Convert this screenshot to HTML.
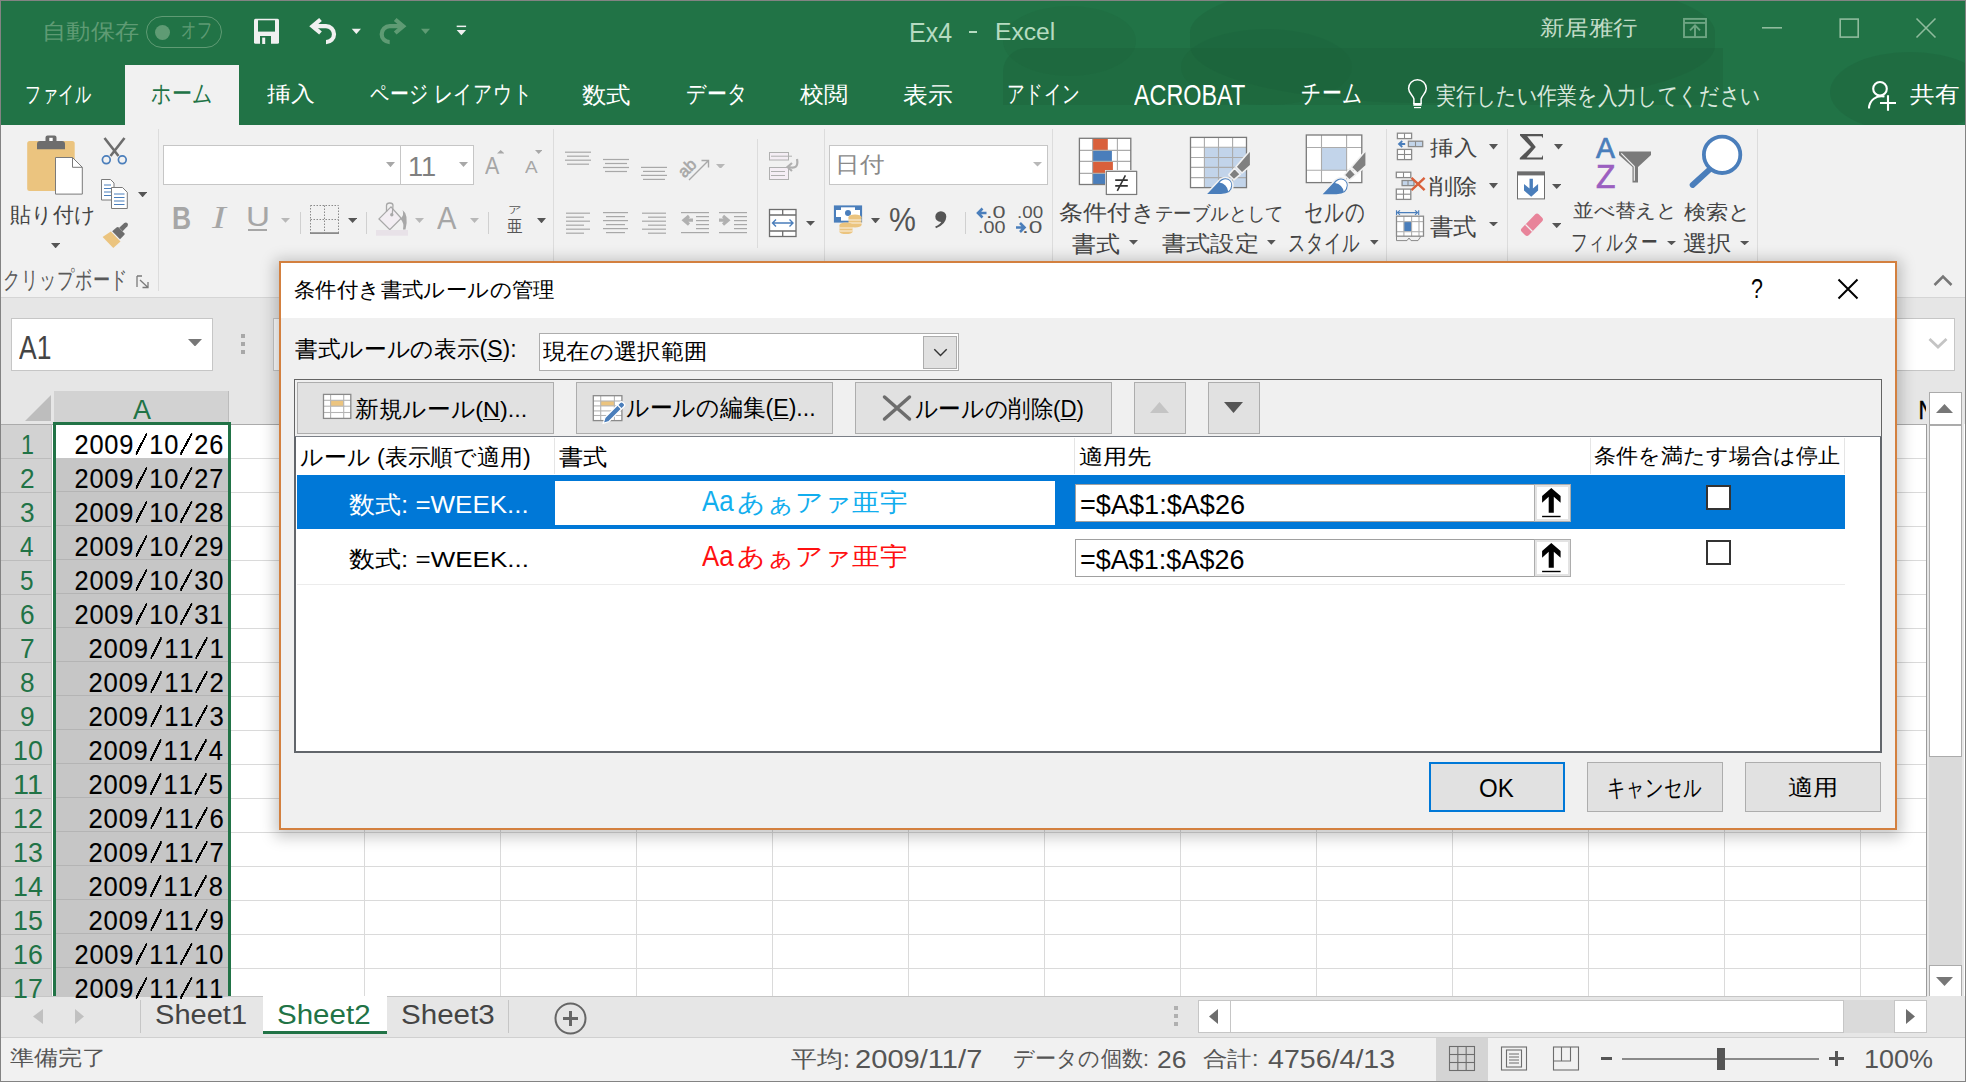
<!DOCTYPE html>
<html><head><meta charset="utf-8"><style>
html,body{margin:0;padding:0;width:1966px;height:1082px;overflow:hidden;background:#fff;font-family:"Liberation Sans",sans-serif}
u{text-decoration-thickness:1px;text-underline-offset:2px}
</style></head><body>
<div style="position:absolute;z-index:1;left:0px;top:0px;width:1966px;height:125px;background:#217346"></div>
<div style="position:absolute;z-index:1;left:1003px;top:48px;width:720px;height:57px;background:#1b5e37;opacity:0.3;border-radius:24px 0 0 0"></div>
<div style="position:absolute;z-index:1;left:1003px;top:6px;width:133px;height:70px;background:#1b5e37;opacity:0.18;border-radius:50%"></div>
<div style="position:absolute;z-index:1;left:1181px;top:29px;width:171px;height:76px;background:#1b5e37;opacity:0.22;border-radius:50%"></div>
<div style="position:absolute;z-index:1;left:1190px;top:-25px;width:525px;height:128px;background:#1b5e37;opacity:0.3;border-radius:45%"></div>
<div style="position:absolute;z-index:1;left:1830px;top:52px;width:160px;height:80px;background:#1b5e37;opacity:0.3;border-radius:50%"></div>
<div style="position:absolute;z-index:1;left:1560px;top:60px;width:160px;height:45px;background:#1b5e37;opacity:0.1;border-radius:0"></div>
<div style="position:absolute;z-index:1;left:0px;top:125px;width:1966px;height:172px;background:#f1f1f1"></div>
<div style="position:absolute;z-index:1;left:0px;top:298px;width:1966px;height:126px;background:#e6e6e6"></div>
<div style="position:absolute;z-index:1;left:228px;top:424px;width:1699px;height:572px;background-color:#fff;background-image:repeating-linear-gradient(to bottom, transparent 0, transparent 33px, #dadada 33px, #dadada 34px),repeating-linear-gradient(to right, transparent 0, transparent 135px, #dadada 135px, #dadada 136px);background-position:0 1px, 1px 0"></div>
<div style="position:absolute;z-index:1;left:228px;top:424px;width:1px;height:572px;background:#dadada"></div>
<div style="position:absolute;z-index:1;left:52px;top:424px;width:176px;height:572px;background:#fff"></div>
<div style="position:absolute;z-index:1;left:52px;top:391px;width:1875px;height:33px;background:#e6e6e6"></div>
<div style="position:absolute;z-index:1;left:0px;top:424px;width:52px;height:572px;background:#d2d2d2;background-image:repeating-linear-gradient(to bottom, transparent 0, transparent 33px, #bcbcbc 33px, #bcbcbc 34px);background-position:0 1px"></div>
<div style="position:absolute;z-index:2;left:125px;top:65px;width:114px;height:60px;background:#f1f1f1"></div>
<div style="position:absolute;z-index:2;left:0px;top:297px;width:1966px;height:1px;background:#d5d5d5"></div>
<div style="position:absolute;z-index:2;left:158px;top:129px;width:1px;height:162px;background:#dcdcdc"></div>
<div style="position:absolute;z-index:2;left:553px;top:129px;width:1px;height:162px;background:#dcdcdc"></div>
<div style="position:absolute;z-index:2;left:824px;top:129px;width:1px;height:162px;background:#dcdcdc"></div>
<div style="position:absolute;z-index:2;left:1052px;top:129px;width:1px;height:162px;background:#dcdcdc"></div>
<div style="position:absolute;z-index:2;left:1386px;top:129px;width:1px;height:162px;background:#dcdcdc"></div>
<div style="position:absolute;z-index:2;left:1507px;top:129px;width:1px;height:162px;background:#dcdcdc"></div>
<div style="position:absolute;z-index:2;left:1757px;top:129px;width:1px;height:162px;background:#dcdcdc"></div>
<div style="position:absolute;z-index:2;left:757px;top:139px;width:1px;height:109px;background:#dcdcdc"></div>
<div style="position:absolute;z-index:2;left:163px;top:145px;width:238px;height:40px;background:#fff;border:1px solid #c6c6c6;box-sizing:border-box"></div>
<div style="position:absolute;z-index:2;left:400px;top:145px;width:74px;height:40px;background:#fff;border:1px solid #c6c6c6;box-sizing:border-box"></div>
<div style="position:absolute;z-index:2;left:829px;top:145px;width:219px;height:40px;background:#fff;border:1px solid #c6c6c6;box-sizing:border-box"></div>
<div style="position:absolute;z-index:2;left:11px;top:318px;width:202px;height:53px;background:#fff;border:1px solid #c6c6c6;box-sizing:border-box"></div>
<div style="position:absolute;z-index:2;left:273px;top:318px;width:1682px;height:53px;background:#fff;border:1px solid #c6c6c6;box-sizing:border-box"></div>
<div style="position:absolute;z-index:2;left:0px;top:424px;width:1927px;height:1px;background:#ababab"></div>
<div style="position:absolute;z-index:2;left:54px;top:391px;width:175px;height:33px;background:#d2d2d2"></div>
<div style="position:absolute;z-index:2;left:228px;top:391px;width:1px;height:33px;background:#bcbcbc"></div>
<div style="position:absolute;z-index:2;left:1900px;top:392px;width:26px;height:32px;overflow:hidden"><div style="position:absolute;left:17.4px;top:5px;font-family:Liberation Sans;font-size:26px;line-height:1;color:#000;-webkit-text-stroke:0.5px #000;transform:scaleX(0.85)">N</div></div>
<div style="position:absolute;z-index:2;left:51px;top:424px;width:1px;height:572px;background:#bcbcbc"></div>
<div style="position:absolute;z-index:2;left:55px;top:458px;width:173px;height:538px;background:#c6c6c6;background-image:repeating-linear-gradient(to bottom, transparent 0, transparent 33px, #b4b4b4 33px, #b4b4b4 34px)"></div>
<div style="position:absolute;z-index:2;left:1927px;top:391px;width:37px;height:606px;background:#e6e6e6"></div>
<div style="position:absolute;z-index:3;left:146px;top:16px;width:76px;height:32px;border:1px solid #5f9b74;border-radius:16px;box-sizing:border-box"></div>
<div style="position:absolute;z-index:3;left:155px;top:24.5px;width:15px;height:15px;background:#5f9b74;border-radius:50%"></div>
<div style="position:absolute;z-index:3;left:969px;top:31px;width:8px;height:2px;background:#b6dbc1"></div>
<div style="position:absolute;z-index:3;left:248px;top:229px;width:19px;height:2px;background:#a6a6a6"></div>
<div style="position:absolute;z-index:3;left:241px;top:334px;width:4px;height:4px;background:#a8a8a8"></div>
<div style="position:absolute;z-index:3;left:241px;top:342px;width:4px;height:4px;background:#a8a8a8"></div>
<div style="position:absolute;z-index:3;left:241px;top:350px;width:4px;height:4px;background:#a8a8a8"></div>
<svg style="position:absolute;z-index:3;left:25px;top:395px" width="26" height="26" viewBox="0 0 26 26"><polygon points="26,0 26,26 0,26" fill="#bdbdbd"/></svg>
<div style="position:absolute;z-index:3;left:53px;top:422px;width:178px;height:590px;border:3px solid #217346;box-sizing:border-box;border-bottom:none"></div>
<div style="position:absolute;z-index:3;left:1929px;top:425px;width:33px;height:540px;background:#dadada"></div>
<div style="position:absolute;z-index:3;left:1929px;top:392px;width:33px;height:33px;background:#fff;border:1px solid #ababab;box-sizing:border-box"></div>
<div style="position:absolute;z-index:3;left:1929px;top:425px;width:33px;height:332px;background:#fff;border:1px solid #ababab;box-sizing:border-box"></div>
<div style="position:absolute;z-index:3;left:1929px;top:965px;width:33px;height:32px;background:#fff;border:1px solid #ababab;box-sizing:border-box"></div>
<svg style="position:absolute;z-index:3;left:1936px;top:404px" width="17" height="9" viewBox="0 0 17 9"><polygon points="8.5,0 17,9 0,9" fill="#777"/></svg>
<svg style="position:absolute;z-index:3;left:1936px;top:977px" width="17" height="9" viewBox="0 0 17 9"><polygon points="0,0 17,0 8.5,9" fill="#777"/></svg>
<div style="position:absolute;z-index:3;left:1926px;top:424px;width:1px;height:572px;background:#9b9b9b"></div>
<div style="position:absolute;z-index:3;left:299.5px;top:212px;width:1px;height:21.5px;background:#d0d0d0"></div>
<div style="position:absolute;z-index:3;left:366.4px;top:212px;width:1px;height:21.5px;background:#d0d0d0"></div>
<div style="position:absolute;z-index:3;left:488.3px;top:212px;width:1px;height:21.5px;background:#d0d0d0"></div>
<div style="position:absolute;z-index:3;left:965.3px;top:212px;width:1px;height:22px;background:#d0d0d0"></div>
<div style="position:absolute;z-index:4;left:0px;top:996px;width:1966px;height:41px;background:#e6e6e6"></div>
<div style="position:absolute;z-index:4;left:0px;top:996px;width:1927px;height:1px;background:#c6c6c6"></div>
<div style="position:absolute;z-index:4;left:0px;top:1037px;width:1966px;height:45px;background:#f1f1f1"></div>
<div style="position:absolute;z-index:4;left:0px;top:1037px;width:1966px;height:1px;background:#d0d0d0"></div>
<svg style="position:absolute;z-index:4;left:0;top:0;pointer-events:none" width="1966" height="1082" viewBox="0 0 1966 1082">
<rect x="27.2" y="141" width="47.5" height="50" rx="2.5" fill="#ebc47f"/>
<path d="M37,149.3 L37,144 Q37,141 40,141 L45.5,141 L45.5,137.5 Q45.5,135.5 47.5,135.5 L54.5,135.5 Q56.5,135.5 56.5,137.5 L56.5,141 L62,141 Q65,141 65,144 L65,149.3 Z" fill="#6d6d6d"/>
<rect x="49.3" y="137.8" width="3.4" height="3.2" fill="#fff"/>
<path d="M55.5,157.5 L72.5,157.5 L82.3,167.3 L82.3,194.1 L55.5,194.1 Z" fill="#fff" stroke="#7a7a7a" stroke-width="1"/>
<path d="M72.5,157.5 L72.5,167.3 L82.3,167.3" fill="none" stroke="#7a7a7a" stroke-width="1"/>
<path d="M104.5,138 L118.5,156 M124.5,138 L110.5,156" stroke="#6d6d6d" stroke-width="2.6"/>
<circle cx="106.3" cy="159.8" r="3.9" fill="none" stroke="#4a7ebb" stroke-width="1.7"/>
<circle cx="122.3" cy="159.8" r="3.9" fill="none" stroke="#4a7ebb" stroke-width="1.7"/>
<path d="M101.5,179.5 L110.5,179.5 L114,183 L114,200 L101.5,200 Z" fill="#fff" stroke="#7a7a7a" stroke-width="1"/>
<path d="M104,185 h7 M104,188.5 h7 M104,192 h7 M104,195.5 h7" stroke="#4a7ebb" stroke-width="1"/>
<path d="M111.5,187.5 L122.5,187.5 L127.3,192.3 L127.3,208.5 L111.5,208.5 Z" fill="#fff" stroke="#7a7a7a" stroke-width="1"/>
<path d="M114,194 h10.5 M114,197.5 h10.5 M114,201 h10.5 M114,204.5 h10.5" stroke="#4a7ebb" stroke-width="1"/>
<path d="M102.6,236.9 L110.8,231.5 L120.5,241.5 L113.3,247.9 Z" fill="#ebc47f"/>
<path d="M112.2,231.2 L116.5,227.5 Q117.8,226.6 118.8,227.6 L124.3,233.2 Q125.1,234.2 124.2,235.1 L120,239.3 Z" fill="#6d6d6d"/>
<path d="M119.2,227.8 L124.3,223 Q126,221.8 127.5,223.3 Q128.6,224.8 127.4,226.2 L122.6,231.2 Z" fill="#6d6d6d"/>
<path d="M137,276 L137,287 M137,276 L142,276 M140,280 L148,287.5 M148,282 L148,287.5 L142.5,287.5" fill="none" stroke="#7a7a7a" stroke-width="1.3"/>
</svg>
<svg style="position:absolute;z-index:4;left:51px;top:243px" width="9.200000000000003" height="5.300000000000011" viewBox="0 0 9.200000000000003 5.300000000000011"><polygon points="0,0 9.200000000000003,0 4.600000000000001,5.300000000000011" fill="#555"/></svg>
<svg style="position:absolute;z-index:4;left:137.8px;top:191.7px" width="9.199999999999989" height="5.300000000000011" viewBox="0 0 9.199999999999989 5.300000000000011"><polygon points="0,0 9.199999999999989,0 4.599999999999994,5.300000000000011" fill="#555"/></svg>
<svg style="position:absolute;z-index:4;left:386px;top:161.8px" width="9" height="5.199999999999989" viewBox="0 0 9 5.199999999999989"><polygon points="0,0 9,0 4.5,5.199999999999989" fill="#a8a8a8"/></svg>
<svg style="position:absolute;z-index:4;left:459px;top:162px" width="9" height="5" viewBox="0 0 9 5"><polygon points="0,0 9,0 4.5,5" fill="#a8a8a8"/></svg>
<svg style="position:absolute;z-index:4;left:281px;top:218px" width="9" height="4.699999999999989" viewBox="0 0 9 4.699999999999989"><polygon points="0,0 9,0 4.5,4.699999999999989" fill="#b8b8b8"/></svg>
<svg style="position:absolute;z-index:4;left:347.8px;top:218px" width="9.199999999999989" height="5" viewBox="0 0 9.199999999999989 5"><polygon points="0,0 9.199999999999989,0 4.599999999999994,5" fill="#555"/></svg>
<svg style="position:absolute;z-index:4;left:415px;top:218px" width="9" height="5" viewBox="0 0 9 5"><polygon points="0,0 9,0 4.5,5" fill="#b8b8b8"/></svg>
<svg style="position:absolute;z-index:4;left:470px;top:218px" width="9" height="5" viewBox="0 0 9 5"><polygon points="0,0 9,0 4.5,5" fill="#b8b8b8"/></svg>
<svg style="position:absolute;z-index:4;left:537px;top:217.7px" width="9" height="5.300000000000011" viewBox="0 0 9 5.300000000000011"><polygon points="0,0 9,0 4.5,5.300000000000011" fill="#555"/></svg>
<svg style="position:absolute;z-index:4;left:716px;top:163.6px" width="9" height="4.900000000000006" viewBox="0 0 9 4.900000000000006"><polygon points="0,0 9,0 4.5,4.900000000000006" fill="#b8b8b8"/></svg>
<svg style="position:absolute;z-index:4;left:806px;top:221px" width="9" height="4.800000000000011" viewBox="0 0 9 4.800000000000011"><polygon points="0,0 9,0 4.5,4.800000000000011" fill="#555"/></svg>
<svg style="position:absolute;z-index:4;left:871px;top:217.6px" width="9" height="5.400000000000006" viewBox="0 0 9 5.400000000000006"><polygon points="0,0 9,0 4.5,5.400000000000006" fill="#555"/></svg>
<svg style="position:absolute;z-index:4;left:1033px;top:162px" width="9" height="4.599999999999994" viewBox="0 0 9 4.599999999999994"><polygon points="0,0 9,0 4.5,4.599999999999994" fill="#b8b8b8"/></svg>
<svg style="position:absolute;z-index:4;left:1129px;top:240px" width="9" height="4.699999999999989" viewBox="0 0 9 4.699999999999989"><polygon points="0,0 9,0 4.5,4.699999999999989" fill="#555"/></svg>
<svg style="position:absolute;z-index:4;left:1267px;top:240px" width="8.700000000000045" height="4.699999999999989" viewBox="0 0 8.700000000000045 4.699999999999989"><polygon points="0,0 8.700000000000045,0 4.350000000000023,4.699999999999989" fill="#555"/></svg>
<svg style="position:absolute;z-index:4;left:1370px;top:240px" width="8.599999999999909" height="4.699999999999989" viewBox="0 0 8.599999999999909 4.699999999999989"><polygon points="0,0 8.599999999999909,0 4.2999999999999545,4.699999999999989" fill="#555"/></svg>
<svg style="position:absolute;z-index:4;left:1489px;top:144.3px" width="9" height="5.399999999999977" viewBox="0 0 9 5.399999999999977"><polygon points="0,0 9,0 4.5,5.399999999999977" fill="#555"/></svg>
<svg style="position:absolute;z-index:4;left:1489px;top:183px" width="9" height="5.5" viewBox="0 0 9 5.5"><polygon points="0,0 9,0 4.5,5.5" fill="#555"/></svg>
<svg style="position:absolute;z-index:4;left:1489px;top:221.6px" width="9" height="4.400000000000006" viewBox="0 0 9 4.400000000000006"><polygon points="0,0 9,0 4.5,4.400000000000006" fill="#555"/></svg>
<svg style="position:absolute;z-index:4;left:1554px;top:144.3px" width="9" height="5.399999999999977" viewBox="0 0 9 5.399999999999977"><polygon points="0,0 9,0 4.5,5.399999999999977" fill="#555"/></svg>
<svg style="position:absolute;z-index:4;left:1552px;top:184px" width="9.400000000000091" height="5" viewBox="0 0 9.400000000000091 5"><polygon points="0,0 9.400000000000091,0 4.7000000000000455,5" fill="#555"/></svg>
<svg style="position:absolute;z-index:4;left:1552px;top:222.9px" width="9.400000000000091" height="5.099999999999994" viewBox="0 0 9.400000000000091 5.099999999999994"><polygon points="0,0 9.400000000000091,0 4.7000000000000455,5.099999999999994" fill="#555"/></svg>
<svg style="position:absolute;z-index:4;left:1667px;top:240.6px" width="9" height="4.200000000000017" viewBox="0 0 9 4.200000000000017"><polygon points="0,0 9,0 4.5,4.200000000000017" fill="#555"/></svg>
<svg style="position:absolute;z-index:4;left:1740px;top:240.6px" width="9.299999999999955" height="4.200000000000017" viewBox="0 0 9.299999999999955 4.200000000000017"><polygon points="0,0 9.299999999999955,0 4.649999999999977,4.200000000000017" fill="#555"/></svg>
<svg style="position:absolute;z-index:4;left:188px;top:338.9px" width="14" height="7.5" viewBox="0 0 14 7.5"><polygon points="0,0 14,0 7.0,7.5" fill="#777"/></svg>
<svg style="position:absolute;z-index:4;left:496.7px;top:150.4px" width="7.300000000000011" height="3.4000000000000057" viewBox="0 0 7.300000000000011 3.4000000000000057"><polygon points="3.6500000000000057,0 7.300000000000011,3.4000000000000057 0,3.4000000000000057" fill="#a8a8a8"/></svg>
<svg style="position:absolute;z-index:4;left:534.6px;top:149.8px" width="7.399999999999977" height="4.0" viewBox="0 0 7.399999999999977 4.0"><polygon points="0,0 7.399999999999977,0 3.6999999999999886,4.0" fill="#a8a8a8"/></svg>
<svg style="position:absolute;z-index:4;left:0;top:0;pointer-events:none" width="1966" height="1082" viewBox="0 0 1966 1082">
<g fill="none" stroke="#8a8a8a" stroke-width="1" stroke-dasharray="1.5 1.5">
<rect x="310.5" y="205.5" width="28" height="28"/>
<line x1="324.5" y1="205.5" x2="324.5" y2="233.5"/>
<line x1="310.5" y1="219.5" x2="338.5" y2="219.5"/>
</g>
<rect x="310" y="232.2" width="29" height="1.8" fill="#8a8a8a"/>
<path d="M379,218.9 L391,206.9 L401.2,218.3 L389.8,229.7 Z" fill="#f3eef3" stroke="#a8a8a8" stroke-width="1.3"/>
<path d="M386.5,212 L386.5,205.5 Q386.5,203 389.8,203 Q393,203 393,205.5 L392.3,214" fill="none" stroke="#a8a8a8" stroke-width="1.3"/>
<circle cx="391.8" cy="214.8" r="1.7" fill="#a8a8a8"/>
<path d="M400.5,219 Q404.5,214.5 402.5,210 Q409,214.5 405.5,229.5 L403,229.5 Q404.5,223 400.5,219 Z" fill="#a8a8a8"/>
<rect x="376" y="230" width="32" height="5.7" fill="#e8e2e8"/>
</svg>
<svg style="position:absolute;z-index:4;left:0;top:0;pointer-events:none" width="1966" height="1082" viewBox="0 0 1966 1082"><rect x="565" y="151.6" width="26" height="1.2" fill="#a8a8a8"/><rect x="567" y="155.6" width="22" height="1.2" fill="#a8a8a8"/><rect x="565" y="159.6" width="26" height="1.2" fill="#a8a8a8"/><rect x="567" y="163.6" width="22" height="1.2" fill="#a8a8a8"/><rect x="603" y="158.9" width="26" height="1.2" fill="#a8a8a8"/><rect x="605" y="162.9" width="22" height="1.2" fill="#a8a8a8"/><rect x="603" y="166.9" width="26" height="1.2" fill="#a8a8a8"/><rect x="605" y="170.9" width="22" height="1.2" fill="#a8a8a8"/><rect x="641" y="166.8" width="26" height="1.2" fill="#a8a8a8"/><rect x="643" y="170.8" width="22" height="1.2" fill="#a8a8a8"/><rect x="641" y="174.8" width="26" height="1.2" fill="#a8a8a8"/><rect x="643" y="178.8" width="22" height="1.2" fill="#a8a8a8"/><rect x="566" y="212.6" width="24" height="1.2" fill="#a8a8a8"/><rect x="566" y="216.6" width="18" height="1.2" fill="#a8a8a8"/><rect x="566" y="220.6" width="24" height="1.2" fill="#a8a8a8"/><rect x="566" y="224.6" width="18" height="1.2" fill="#a8a8a8"/><rect x="566" y="228.6" width="24" height="1.2" fill="#a8a8a8"/><rect x="566" y="232.6" width="18" height="1.2" fill="#a8a8a8"/><rect x="603" y="212" width="25" height="1.2" fill="#a8a8a8"/><rect x="606" y="216" width="19" height="1.2" fill="#a8a8a8"/><rect x="603" y="220" width="25" height="1.2" fill="#a8a8a8"/><rect x="606" y="224" width="19" height="1.2" fill="#a8a8a8"/><rect x="603" y="228" width="25" height="1.2" fill="#a8a8a8"/><rect x="606" y="232" width="19" height="1.2" fill="#a8a8a8"/><rect x="642" y="212.6" width="24" height="1.2" fill="#a8a8a8"/><rect x="648" y="216.6" width="18" height="1.2" fill="#a8a8a8"/><rect x="642" y="220.6" width="24" height="1.2" fill="#a8a8a8"/><rect x="648" y="224.6" width="18" height="1.2" fill="#a8a8a8"/><rect x="642" y="228.6" width="24" height="1.2" fill="#a8a8a8"/><rect x="648" y="232.6" width="18" height="1.2" fill="#a8a8a8"/><rect x="681" y="212" width="28" height="1.2" fill="#a8a8a8"/><rect x="696" y="216" width="13" height="1.2" fill="#a8a8a8"/><rect x="696" y="220" width="13" height="1.2" fill="#a8a8a8"/><rect x="696" y="224" width="13" height="1.2" fill="#a8a8a8"/><rect x="696" y="228" width="13" height="1.2" fill="#a8a8a8"/><rect x="681" y="232" width="28" height="1.2" fill="#a8a8a8"/><rect x="719" y="212" width="28" height="1.2" fill="#a8a8a8"/><rect x="734" y="216" width="13" height="1.2" fill="#a8a8a8"/><rect x="734" y="220" width="13" height="1.2" fill="#a8a8a8"/><rect x="734" y="224" width="13" height="1.2" fill="#a8a8a8"/><rect x="734" y="228" width="13" height="1.2" fill="#a8a8a8"/><rect x="719" y="232" width="28" height="1.2" fill="#a8a8a8"/><path d="M693,220.2 L686,220.2 M689,216 L684,220.2 L689,224.4" fill="none" stroke="#b0b0b0" stroke-width="3.2"/>
<path d="M719,220.2 L726,220.2 M723,216 L728,220.2 L723,224.4" fill="none" stroke="#b0b0b0" stroke-width="3.2"/>
<path d="M689,180 L708,161 M701.5,160.5 L708.5,160.5 L708.5,167.5" fill="none" stroke="#a8a8a8" stroke-width="1.4"/>
<text x="0" y="0" transform="translate(684.5,178.5) rotate(-45)" font-family="Liberation Sans" font-size="16.5" fill="#a8a8a8" stroke="#a8a8a8" stroke-width="0.6">ab</text>
<rect x="769.5" y="152.5" width="19" height="7.5" fill="#f5eef5" stroke="#b0b0b0" stroke-width="1"/>
<rect x="769.5" y="167.5" width="19" height="12" fill="#f5eef5" stroke="#b0b0b0" stroke-width="1"/>
<path d="M771,156.2 h21 M771,171.5 h14 M771,175.5 h14" stroke="#b0b0b0" stroke-width="1"/>
<path d="M797,159 Q799,170 789,167" fill="none" stroke="#b0b0b0" stroke-width="2.2"/>
<path d="M792,163 L787.5,167 L792,171" fill="none" stroke="#b0b0b0" stroke-width="2.2"/>
<rect x="769.5" y="209.5" width="26.5" height="27" fill="#fff" stroke="#6d6d6d" stroke-width="1.3"/>
<path d="M769.5,215 h26.5 M769.5,231 h26.5 M782.7,209.5 v5.5 M782.7,231 v5.5" stroke="#6d6d6d" stroke-width="1.3"/>
<path d="M772.5,223 h20.5 M776,219.5 L772.5,223 L776,226.5 M789.5,219.5 L793,223 L789.5,226.5" fill="none" stroke="#4a7ebb" stroke-width="1.4"/>
</svg>
<svg style="position:absolute;z-index:4;left:0;top:0;pointer-events:none" width="1966" height="1082" viewBox="0 0 1966 1082">
<rect x="835" y="206.5" width="26" height="15" fill="none" stroke="#4a7ebb" stroke-width="2.2"/>
<rect x="836" y="207.5" width="24" height="13" fill="#fff"/>
<path d="M835,206 h6 v4 h-6 Z M855,206 h7 v4 h-7 Z M835,217 h6 v5 h-6 Z" fill="#4a7ebb"/>
<circle cx="848" cy="213" r="3" fill="#4a7ebb"/>
<ellipse cx="855" cy="217" rx="6.5" ry="2.5" fill="#ebc47f"/>
<rect x="848.5" y="217" width="13" height="8" fill="#ebc47f"/>
<ellipse cx="855" cy="225" rx="6.5" ry="2.5" fill="#ebc47f"/>
<path d="M848.5,220 h13 M848.5,223 h13" stroke="#fff" stroke-width="0.8"/>
<ellipse cx="846" cy="225" rx="6.5" ry="2.5" fill="#ebc47f"/>
<rect x="839.5" y="225" width="13" height="7" fill="#ebc47f"/>
<ellipse cx="846" cy="232" rx="6.5" ry="2" fill="#ebc47f"/>
<path d="M839.5,228 h13 M839.5,231 h13" stroke="#fff" stroke-width="0.8"/>
<path d="M935.3,216.5 A5.5 5.5 0 1 1 946.3,216.8 Q946,224.5 936,228.2 L935.2,226.6 Q940.2,224 941.3,221.9 Q935.3,221.5 935.3,216.5 Z" fill="#555"/>
<path d="M986.5,213 L978.5,213 M982.5,208.5 L978,213 L982.5,217.5" fill="none" stroke="#4a7ebb" stroke-width="2.6"/>
<path d="M1016,227.5 L1024,227.5 M1020,223 L1024.5,227.5 L1020,232" fill="none" stroke="#4a7ebb" stroke-width="2.6"/>
</svg>
<svg style="position:absolute;z-index:4;left:0;top:0;pointer-events:none" width="1966" height="1082" viewBox="0 0 1966 1082">
<rect x="1079.4" y="138.3" width="51.4" height="46.2" fill="#fff"/>
<rect x="1092.6" y="138.3" width="15.2" height="12.1" fill="#d9603b"/>
<rect x="1092.6" y="150.4" width="19.3" height="11" fill="#4a7ebb"/>
<rect x="1092.6" y="161.4" width="20.3" height="12" fill="#d9603b"/>
<rect x="1092.6" y="173.4" width="14" height="11.1" fill="#4a7ebb"/>
<line x1="1092.6" y1="138.3" x2="1092.6" y2="184.5" stroke="#ababab" stroke-width="1.1"/><line x1="1117.4" y1="138.3" x2="1117.4" y2="184.5" stroke="#ababab" stroke-width="1.1"/><line x1="1079.4" y1="150.4" x2="1130.8" y2="150.4" stroke="#ababab" stroke-width="1.1"/><line x1="1079.4" y1="161.4" x2="1130.8" y2="161.4" stroke="#ababab" stroke-width="1.1"/><line x1="1079.4" y1="173.4" x2="1130.8" y2="173.4" stroke="#ababab" stroke-width="1.1"/><rect x="1079.4" y="138.3" width="51.399999999999864" height="46.19999999999999" fill="none" stroke="#7a7a7a" stroke-width="1.3"/>
<rect x="1106.3" y="171.3" width="30.4" height="23.2" fill="#fff" stroke="#fff" stroke-width="2.5"/>
<rect x="1106.3" y="171.3" width="30.4" height="23.2" fill="#fff" stroke="#7a7a7a" stroke-width="1.3"/>
<path d="M1115.2,180.1 h12.6 M1115.2,185.9 h12.6 M1117.3,190.8 L1125.4,175.4" stroke="#333" stroke-width="1.6"/>
<rect x="1190.5" y="137.4" width="56" height="50.2" fill="#fff"/>
<rect x="1204.4" y="147.3" width="42.1" height="40.3" fill="#c2d4ea"/>
<line x1="1204.4" y1="137.4" x2="1204.4" y2="187.6" stroke="#ababab" stroke-width="1.1"/><line x1="1218.5" y1="137.4" x2="1218.5" y2="187.6" stroke="#ababab" stroke-width="1.1"/><line x1="1232.6" y1="137.4" x2="1232.6" y2="187.6" stroke="#ababab" stroke-width="1.1"/><line x1="1190.5" y1="147.3" x2="1246.5" y2="147.3" stroke="#ababab" stroke-width="1.1"/><line x1="1190.5" y1="157.5" x2="1246.5" y2="157.5" stroke="#ababab" stroke-width="1.1"/><line x1="1190.5" y1="167.4" x2="1246.5" y2="167.4" stroke="#ababab" stroke-width="1.1"/><line x1="1190.5" y1="177.6" x2="1246.5" y2="177.6" stroke="#ababab" stroke-width="1.1"/><rect x="1190.5" y="137.4" width="56.0" height="50.19999999999999" fill="none" stroke="#7a7a7a" stroke-width="1.3"/>
<rect x="1306.3" y="135" width="55.5" height="47.6" fill="#fff"/>
<rect x="1321.5" y="147.5" width="25.1" height="22.8" fill="#c2d4ea"/>
<line x1="1321.5" y1="135" x2="1321.5" y2="182.6" stroke="#ababab" stroke-width="1.1"/><line x1="1346.6" y1="135" x2="1346.6" y2="182.6" stroke="#ababab" stroke-width="1.1"/><line x1="1306.3" y1="147.5" x2="1361.8" y2="147.5" stroke="#ababab" stroke-width="1.1"/><line x1="1306.3" y1="170.3" x2="1361.8" y2="170.3" stroke="#ababab" stroke-width="1.1"/><rect x="1306.3" y="135" width="55.5" height="47.599999999999994" fill="none" stroke="#7a7a7a" stroke-width="1.3"/>
</svg>
<svg style="position:absolute;z-index:4;left:0;top:0;pointer-events:none" width="1966" height="1082" viewBox="0 0 1966 1082">
<rect x="1397.4" y="133.2" width="14.2" height="5.4" fill="#fff"/><line x1="1404.5" y1="133.2" x2="1404.5" y2="138.6" stroke="#8a8a8a" stroke-width="1.1"/><rect x="1397.4" y="133.2" width="14.199999999999818" height="5.400000000000006" fill="none" stroke="#8a8a8a" stroke-width="1.3"/>
<rect x="1397.4" y="149.4" width="14.2" height="10.2" fill="#fff"/><line x1="1404.5" y1="149.4" x2="1404.5" y2="159.6" stroke="#8a8a8a" stroke-width="1.1"/><line x1="1397.4" y1="154.5" x2="1411.6" y2="154.5" stroke="#8a8a8a" stroke-width="1.1"/><rect x="1397.4" y="149.4" width="14.199999999999818" height="10.199999999999989" fill="none" stroke="#8a8a8a" stroke-width="1.3"/>
<rect x="1408.4" y="141.2" width="14.3" height="5.4" fill="#c3d5ea"/><line x1="1415.5" y1="141.2" x2="1415.5" y2="146.6" stroke="#8a8a8a" stroke-width="1.1"/><rect x="1408.4" y="141.2" width="14.299999999999955" height="5.400000000000006" fill="none" stroke="#8a8a8a" stroke-width="1.3"/>
<path d="M1405.2,144 L1399.5,144 M1402.3,141 L1399,144 L1402.3,147" fill="none" stroke="#4a7ebb" stroke-width="1.8"/>
<rect x="1396.3" y="172.2" width="14.5" height="5.4" fill="#fff"/><line x1="1403.5" y1="172.2" x2="1403.5" y2="177.6" stroke="#8a8a8a" stroke-width="1.1"/><rect x="1396.3" y="172.2" width="14.5" height="5.400000000000006" fill="none" stroke="#8a8a8a" stroke-width="1.3"/>
<rect x="1396.3" y="189.1" width="14.5" height="10.3" fill="#fff"/><line x1="1403.5" y1="189.1" x2="1403.5" y2="199.4" stroke="#8a8a8a" stroke-width="1.1"/><line x1="1396.3" y1="194.2" x2="1410.8" y2="194.2" stroke="#8a8a8a" stroke-width="1.1"/><rect x="1396.3" y="189.1" width="14.5" height="10.300000000000011" fill="none" stroke="#8a8a8a" stroke-width="1.3"/>
<rect x="1402.1" y="180.5" width="11.9" height="5.1" fill="#c3d5ea"/><line x1="1408" y1="180.5" x2="1408" y2="185.6" stroke="#8a8a8a" stroke-width="1.1"/><rect x="1402.1" y="180.5" width="11.900000000000091" height="5.099999999999994" fill="none" stroke="#8a8a8a" stroke-width="1.3"/>
<path d="M1411.5,177.8 L1424.6,190.2 M1424.6,177.8 L1411.5,190.2" stroke="#d9603b" stroke-width="2.4"/>
<path d="M1397,212.6 h21 M1400,210.3 L1397.3,212.6 L1400,214.9 M1415,210.3 L1417.7,212.6 L1415,214.9" fill="none" stroke="#4a7ebb" stroke-width="1.1"/>
<path d="M1396.5,210.3 v4.8 M1418.7,210.3 v4.8" stroke="#4a7ebb" stroke-width="1.1"/>
<rect x="1396.5" y="216.2" width="27" height="20" fill="#fff"/>
<rect x="1403.9" y="221.6" width="7.7" height="9.6" fill="#4a7ebb"/>
<line x1="1403.9" y1="216.2" x2="1403.9" y2="236.2" stroke="#b0b0b0" stroke-width="1.1"/><line x1="1411.6" y1="216.2" x2="1411.6" y2="236.2" stroke="#b0b0b0" stroke-width="1.1"/><line x1="1419" y1="216.2" x2="1419" y2="236.2" stroke="#b0b0b0" stroke-width="1.1"/><line x1="1396.5" y1="221.6" x2="1423.5" y2="221.6" stroke="#b0b0b0" stroke-width="1.1"/><line x1="1396.5" y1="231.7" x2="1423.5" y2="231.7" stroke="#b0b0b0" stroke-width="1.1"/><rect x="1396.5" y="216.2" width="27.0" height="20.0" fill="none" stroke="#8a8a8a" stroke-width="1.3"/>
<path d="M1396.5,236.2 L1396.5,240.6 L1407,240.6 L1409,238 L1411,240.6 L1418,240.6 L1421,236.2" fill="none" stroke="#8a8a8a" stroke-width="1"/>
</svg>
<svg style="position:absolute;z-index:4;left:0;top:0;pointer-events:none" width="1966" height="1082" viewBox="0 0 1966 1082">
<path d="M1520,134 L1543,134 L1543,138.3 L1541.6,136.2 L1527.2,136.2 L1535.8,147 L1526.6,157.4 L1541.6,157.4 L1543,155 L1543,159.5 L1519.8,159.5 L1519.8,158 L1531,147 L1520,135.5 Z" fill="#555"/>
<rect x="1517.5" y="171.9" width="27" height="27" fill="#fff" stroke="#6d6d6d" stroke-width="1"/>
<rect x="1517.5" y="171.9" width="27" height="3.5" fill="#6d6d6d"/>
<polygon points="1529.5,178.8 1532.9,178.8 1532.9,188.5 1538.1,184 1538.1,190.5 1531.2,196.8 1524,190.5 1524,184 1529.5,188.5" fill="#4a7ebb"/>
<path d="M1522,228 L1535,214.5 Q1537,212.5 1539,214.5 L1542,217.5 Q1544,219.5 1542,221.5 L1529,235 Q1527,237 1525,235 L1521.5,231.5 Q1520,230 1522,228 Z" fill="#e8849a"/>
<path d="M1525.5,224.5 L1532.5,231.5" stroke="#f1f1f1" stroke-width="1.2"/>
<path d="M1651,151.5 L1619,151.5 L1619,155 L1632.5,167 L1632.5,182.5 L1638,182.5 L1638,167 L1651,155 Z" fill="#7a7a7a"/>
<path d="M1621.3,153.3 L1634.3,166.5 L1634.3,180.8" fill="none" stroke="#f1f1f1" stroke-width="1.2"/>
<path d="M1710,169.2 L1692.6,185" stroke="#4a7ebb" stroke-width="5.8" stroke-linecap="round"/>
<circle cx="1722.1" cy="154.8" r="18.2" fill="#fff" stroke="#4a7ebb" stroke-width="3.8"/>
<path d="M1934.5,285 L1943,276.5 L1951.5,285" fill="none" stroke="#777" stroke-width="2.5"/>
<path d="M1929.5,339 L1938,347 L1946.5,339" fill="none" stroke="#c4c4c4" stroke-width="2.8"/>
</svg>
<div style="position:absolute;z-index:4;left:73.65px;top:431.30px;font-family:'Liberation Sans',sans-serif;font-weight:400;font-style:normal;font-size:27.51px;line-height:1;white-space:nowrap;color:#000;transform:scaleX(0.9233);transform-origin:0 0;-webkit-text-stroke:0.12px #000"><span style="display:inline-block;width:0.59em;text-align:center">2</span><span style="display:inline-block;width:0.59em;text-align:center">0</span><span style="display:inline-block;width:0.59em;text-align:center">0</span><span style="display:inline-block;width:0.59em;text-align:center">9</span><span style="display:inline-block;width:0.59em;text-align:center"><span style="display:inline-block;width:0.46em;height:0.8em;vertical-align:-0.04em;background:linear-gradient(to bottom right, transparent calc(50% - 1.1px), #000 calc(50% - 1.1px), #000 calc(50% + 1.1px), transparent calc(50% + 1.1px))"></span></span><span style="display:inline-block;width:0.59em;text-align:center">1</span><span style="display:inline-block;width:0.59em;text-align:center">0</span><span style="display:inline-block;width:0.59em;text-align:center"><span style="display:inline-block;width:0.46em;height:0.8em;vertical-align:-0.04em;background:linear-gradient(to bottom right, transparent calc(50% - 1.1px), #000 calc(50% - 1.1px), #000 calc(50% + 1.1px), transparent calc(50% + 1.1px))"></span></span><span style="display:inline-block;width:0.59em;text-align:center">2</span><span style="display:inline-block;width:0.59em;text-align:center">6</span></div>
<div style="position:absolute;z-index:4;left:20.83px;top:430.50px;font-family:'Liberation Sans',sans-serif;font-weight:400;font-style:normal;font-size:27.96px;line-height:1;white-space:nowrap;color:#217346;transform:scaleX(0.8333);transform-origin:0 0;">1</div>
<div style="position:absolute;z-index:4;left:73.65px;top:465.30px;font-family:'Liberation Sans',sans-serif;font-weight:400;font-style:normal;font-size:27.51px;line-height:1;white-space:nowrap;color:#000;transform:scaleX(0.9233);transform-origin:0 0;-webkit-text-stroke:0.12px #000"><span style="display:inline-block;width:0.59em;text-align:center">2</span><span style="display:inline-block;width:0.59em;text-align:center">0</span><span style="display:inline-block;width:0.59em;text-align:center">0</span><span style="display:inline-block;width:0.59em;text-align:center">9</span><span style="display:inline-block;width:0.59em;text-align:center"><span style="display:inline-block;width:0.46em;height:0.8em;vertical-align:-0.04em;background:linear-gradient(to bottom right, transparent calc(50% - 1.1px), #000 calc(50% - 1.1px), #000 calc(50% + 1.1px), transparent calc(50% + 1.1px))"></span></span><span style="display:inline-block;width:0.59em;text-align:center">1</span><span style="display:inline-block;width:0.59em;text-align:center">0</span><span style="display:inline-block;width:0.59em;text-align:center"><span style="display:inline-block;width:0.46em;height:0.8em;vertical-align:-0.04em;background:linear-gradient(to bottom right, transparent calc(50% - 1.1px), #000 calc(50% - 1.1px), #000 calc(50% + 1.1px), transparent calc(50% + 1.1px))"></span></span><span style="display:inline-block;width:0.59em;text-align:center">2</span><span style="display:inline-block;width:0.59em;text-align:center">7</span></div>
<div style="position:absolute;z-index:4;left:20.06px;top:464.50px;font-family:'Liberation Sans',sans-serif;font-weight:400;font-style:normal;font-size:27.96px;line-height:1;white-space:nowrap;color:#217346;transform:scaleX(0.9385);transform-origin:0 0;">2</div>
<div style="position:absolute;z-index:4;left:73.65px;top:499.30px;font-family:'Liberation Sans',sans-serif;font-weight:400;font-style:normal;font-size:27.51px;line-height:1;white-space:nowrap;color:#000;transform:scaleX(0.9233);transform-origin:0 0;-webkit-text-stroke:0.12px #000"><span style="display:inline-block;width:0.59em;text-align:center">2</span><span style="display:inline-block;width:0.59em;text-align:center">0</span><span style="display:inline-block;width:0.59em;text-align:center">0</span><span style="display:inline-block;width:0.59em;text-align:center">9</span><span style="display:inline-block;width:0.59em;text-align:center"><span style="display:inline-block;width:0.46em;height:0.8em;vertical-align:-0.04em;background:linear-gradient(to bottom right, transparent calc(50% - 1.1px), #000 calc(50% - 1.1px), #000 calc(50% + 1.1px), transparent calc(50% + 1.1px))"></span></span><span style="display:inline-block;width:0.59em;text-align:center">1</span><span style="display:inline-block;width:0.59em;text-align:center">0</span><span style="display:inline-block;width:0.59em;text-align:center"><span style="display:inline-block;width:0.46em;height:0.8em;vertical-align:-0.04em;background:linear-gradient(to bottom right, transparent calc(50% - 1.1px), #000 calc(50% - 1.1px), #000 calc(50% + 1.1px), transparent calc(50% + 1.1px))"></span></span><span style="display:inline-block;width:0.59em;text-align:center">2</span><span style="display:inline-block;width:0.59em;text-align:center">8</span></div>
<div style="position:absolute;z-index:4;left:20.06px;top:498.50px;font-family:'Liberation Sans',sans-serif;font-weight:400;font-style:normal;font-size:27.96px;line-height:1;white-space:nowrap;color:#217346;transform:scaleX(0.9385);transform-origin:0 0;">3</div>
<div style="position:absolute;z-index:4;left:73.65px;top:533.30px;font-family:'Liberation Sans',sans-serif;font-weight:400;font-style:normal;font-size:27.51px;line-height:1;white-space:nowrap;color:#000;transform:scaleX(0.9233);transform-origin:0 0;-webkit-text-stroke:0.12px #000"><span style="display:inline-block;width:0.59em;text-align:center">2</span><span style="display:inline-block;width:0.59em;text-align:center">0</span><span style="display:inline-block;width:0.59em;text-align:center">0</span><span style="display:inline-block;width:0.59em;text-align:center">9</span><span style="display:inline-block;width:0.59em;text-align:center"><span style="display:inline-block;width:0.46em;height:0.8em;vertical-align:-0.04em;background:linear-gradient(to bottom right, transparent calc(50% - 1.1px), #000 calc(50% - 1.1px), #000 calc(50% + 1.1px), transparent calc(50% + 1.1px))"></span></span><span style="display:inline-block;width:0.59em;text-align:center">1</span><span style="display:inline-block;width:0.59em;text-align:center">0</span><span style="display:inline-block;width:0.59em;text-align:center"><span style="display:inline-block;width:0.46em;height:0.8em;vertical-align:-0.04em;background:linear-gradient(to bottom right, transparent calc(50% - 1.1px), #000 calc(50% - 1.1px), #000 calc(50% + 1.1px), transparent calc(50% + 1.1px))"></span></span><span style="display:inline-block;width:0.59em;text-align:center">2</span><span style="display:inline-block;width:0.59em;text-align:center">9</span></div>
<div style="position:absolute;z-index:4;left:20.13px;top:532.50px;font-family:'Liberation Sans',sans-serif;font-weight:400;font-style:normal;font-size:27.96px;line-height:1;white-space:nowrap;color:#217346;transform:scaleX(0.8714);transform-origin:0 0;">4</div>
<div style="position:absolute;z-index:4;left:73.65px;top:567.30px;font-family:'Liberation Sans',sans-serif;font-weight:400;font-style:normal;font-size:27.51px;line-height:1;white-space:nowrap;color:#000;transform:scaleX(0.9233);transform-origin:0 0;-webkit-text-stroke:0.12px #000"><span style="display:inline-block;width:0.59em;text-align:center">2</span><span style="display:inline-block;width:0.59em;text-align:center">0</span><span style="display:inline-block;width:0.59em;text-align:center">0</span><span style="display:inline-block;width:0.59em;text-align:center">9</span><span style="display:inline-block;width:0.59em;text-align:center"><span style="display:inline-block;width:0.46em;height:0.8em;vertical-align:-0.04em;background:linear-gradient(to bottom right, transparent calc(50% - 1.1px), #000 calc(50% - 1.1px), #000 calc(50% + 1.1px), transparent calc(50% + 1.1px))"></span></span><span style="display:inline-block;width:0.59em;text-align:center">1</span><span style="display:inline-block;width:0.59em;text-align:center">0</span><span style="display:inline-block;width:0.59em;text-align:center"><span style="display:inline-block;width:0.46em;height:0.8em;vertical-align:-0.04em;background:linear-gradient(to bottom right, transparent calc(50% - 1.1px), #000 calc(50% - 1.1px), #000 calc(50% + 1.1px), transparent calc(50% + 1.1px))"></span></span><span style="display:inline-block;width:0.59em;text-align:center">3</span><span style="display:inline-block;width:0.59em;text-align:center">0</span></div>
<div style="position:absolute;z-index:4;left:20.13px;top:566.50px;font-family:'Liberation Sans',sans-serif;font-weight:400;font-style:normal;font-size:27.96px;line-height:1;white-space:nowrap;color:#217346;transform:scaleX(0.8714);transform-origin:0 0;">5</div>
<div style="position:absolute;z-index:4;left:73.65px;top:601.30px;font-family:'Liberation Sans',sans-serif;font-weight:400;font-style:normal;font-size:27.51px;line-height:1;white-space:nowrap;color:#000;transform:scaleX(0.9233);transform-origin:0 0;-webkit-text-stroke:0.12px #000"><span style="display:inline-block;width:0.59em;text-align:center">2</span><span style="display:inline-block;width:0.59em;text-align:center">0</span><span style="display:inline-block;width:0.59em;text-align:center">0</span><span style="display:inline-block;width:0.59em;text-align:center">9</span><span style="display:inline-block;width:0.59em;text-align:center"><span style="display:inline-block;width:0.46em;height:0.8em;vertical-align:-0.04em;background:linear-gradient(to bottom right, transparent calc(50% - 1.1px), #000 calc(50% - 1.1px), #000 calc(50% + 1.1px), transparent calc(50% + 1.1px))"></span></span><span style="display:inline-block;width:0.59em;text-align:center">1</span><span style="display:inline-block;width:0.59em;text-align:center">0</span><span style="display:inline-block;width:0.59em;text-align:center"><span style="display:inline-block;width:0.46em;height:0.8em;vertical-align:-0.04em;background:linear-gradient(to bottom right, transparent calc(50% - 1.1px), #000 calc(50% - 1.1px), #000 calc(50% + 1.1px), transparent calc(50% + 1.1px))"></span></span><span style="display:inline-block;width:0.59em;text-align:center">3</span><span style="display:inline-block;width:0.59em;text-align:center">1</span></div>
<div style="position:absolute;z-index:4;left:20.06px;top:600.50px;font-family:'Liberation Sans',sans-serif;font-weight:400;font-style:normal;font-size:27.96px;line-height:1;white-space:nowrap;color:#217346;transform:scaleX(0.9385);transform-origin:0 0;">6</div>
<div style="position:absolute;z-index:4;left:87.83px;top:635.30px;font-family:'Liberation Sans',sans-serif;font-weight:400;font-style:normal;font-size:27.51px;line-height:1;white-space:nowrap;color:#000;transform:scaleX(0.9338);transform-origin:0 0;-webkit-text-stroke:0.12px #000"><span style="display:inline-block;width:0.59em;text-align:center">2</span><span style="display:inline-block;width:0.59em;text-align:center">0</span><span style="display:inline-block;width:0.59em;text-align:center">0</span><span style="display:inline-block;width:0.59em;text-align:center">9</span><span style="display:inline-block;width:0.59em;text-align:center"><span style="display:inline-block;width:0.46em;height:0.8em;vertical-align:-0.04em;background:linear-gradient(to bottom right, transparent calc(50% - 1.1px), #000 calc(50% - 1.1px), #000 calc(50% + 1.1px), transparent calc(50% + 1.1px))"></span></span><span style="display:inline-block;width:0.59em;text-align:center">1</span><span style="display:inline-block;width:0.59em;text-align:center">1</span><span style="display:inline-block;width:0.59em;text-align:center"><span style="display:inline-block;width:0.46em;height:0.8em;vertical-align:-0.04em;background:linear-gradient(to bottom right, transparent calc(50% - 1.1px), #000 calc(50% - 1.1px), #000 calc(50% + 1.1px), transparent calc(50% + 1.1px))"></span></span><span style="display:inline-block;width:0.59em;text-align:center">1</span></div>
<div style="position:absolute;z-index:4;left:20.06px;top:634.50px;font-family:'Liberation Sans',sans-serif;font-weight:400;font-style:normal;font-size:27.96px;line-height:1;white-space:nowrap;color:#217346;transform:scaleX(0.9385);transform-origin:0 0;">7</div>
<div style="position:absolute;z-index:4;left:87.83px;top:669.30px;font-family:'Liberation Sans',sans-serif;font-weight:400;font-style:normal;font-size:27.51px;line-height:1;white-space:nowrap;color:#000;transform:scaleX(0.9338);transform-origin:0 0;-webkit-text-stroke:0.12px #000"><span style="display:inline-block;width:0.59em;text-align:center">2</span><span style="display:inline-block;width:0.59em;text-align:center">0</span><span style="display:inline-block;width:0.59em;text-align:center">0</span><span style="display:inline-block;width:0.59em;text-align:center">9</span><span style="display:inline-block;width:0.59em;text-align:center"><span style="display:inline-block;width:0.46em;height:0.8em;vertical-align:-0.04em;background:linear-gradient(to bottom right, transparent calc(50% - 1.1px), #000 calc(50% - 1.1px), #000 calc(50% + 1.1px), transparent calc(50% + 1.1px))"></span></span><span style="display:inline-block;width:0.59em;text-align:center">1</span><span style="display:inline-block;width:0.59em;text-align:center">1</span><span style="display:inline-block;width:0.59em;text-align:center"><span style="display:inline-block;width:0.46em;height:0.8em;vertical-align:-0.04em;background:linear-gradient(to bottom right, transparent calc(50% - 1.1px), #000 calc(50% - 1.1px), #000 calc(50% + 1.1px), transparent calc(50% + 1.1px))"></span></span><span style="display:inline-block;width:0.59em;text-align:center">2</span></div>
<div style="position:absolute;z-index:4;left:20.06px;top:668.50px;font-family:'Liberation Sans',sans-serif;font-weight:400;font-style:normal;font-size:27.96px;line-height:1;white-space:nowrap;color:#217346;transform:scaleX(0.9385);transform-origin:0 0;">8</div>
<div style="position:absolute;z-index:4;left:87.83px;top:703.30px;font-family:'Liberation Sans',sans-serif;font-weight:400;font-style:normal;font-size:27.51px;line-height:1;white-space:nowrap;color:#000;transform:scaleX(0.9338);transform-origin:0 0;-webkit-text-stroke:0.12px #000"><span style="display:inline-block;width:0.59em;text-align:center">2</span><span style="display:inline-block;width:0.59em;text-align:center">0</span><span style="display:inline-block;width:0.59em;text-align:center">0</span><span style="display:inline-block;width:0.59em;text-align:center">9</span><span style="display:inline-block;width:0.59em;text-align:center"><span style="display:inline-block;width:0.46em;height:0.8em;vertical-align:-0.04em;background:linear-gradient(to bottom right, transparent calc(50% - 1.1px), #000 calc(50% - 1.1px), #000 calc(50% + 1.1px), transparent calc(50% + 1.1px))"></span></span><span style="display:inline-block;width:0.59em;text-align:center">1</span><span style="display:inline-block;width:0.59em;text-align:center">1</span><span style="display:inline-block;width:0.59em;text-align:center"><span style="display:inline-block;width:0.46em;height:0.8em;vertical-align:-0.04em;background:linear-gradient(to bottom right, transparent calc(50% - 1.1px), #000 calc(50% - 1.1px), #000 calc(50% + 1.1px), transparent calc(50% + 1.1px))"></span></span><span style="display:inline-block;width:0.59em;text-align:center">3</span></div>
<div style="position:absolute;z-index:4;left:20.06px;top:702.50px;font-family:'Liberation Sans',sans-serif;font-weight:400;font-style:normal;font-size:27.96px;line-height:1;white-space:nowrap;color:#217346;transform:scaleX(0.9385);transform-origin:0 0;">9</div>
<div style="position:absolute;z-index:4;left:87.85px;top:737.30px;font-family:'Liberation Sans',sans-serif;font-weight:400;font-style:normal;font-size:27.51px;line-height:1;white-space:nowrap;color:#000;transform:scaleX(0.9273);transform-origin:0 0;-webkit-text-stroke:0.12px #000"><span style="display:inline-block;width:0.59em;text-align:center">2</span><span style="display:inline-block;width:0.59em;text-align:center">0</span><span style="display:inline-block;width:0.59em;text-align:center">0</span><span style="display:inline-block;width:0.59em;text-align:center">9</span><span style="display:inline-block;width:0.59em;text-align:center"><span style="display:inline-block;width:0.46em;height:0.8em;vertical-align:-0.04em;background:linear-gradient(to bottom right, transparent calc(50% - 1.1px), #000 calc(50% - 1.1px), #000 calc(50% + 1.1px), transparent calc(50% + 1.1px))"></span></span><span style="display:inline-block;width:0.59em;text-align:center">1</span><span style="display:inline-block;width:0.59em;text-align:center">1</span><span style="display:inline-block;width:0.59em;text-align:center"><span style="display:inline-block;width:0.46em;height:0.8em;vertical-align:-0.04em;background:linear-gradient(to bottom right, transparent calc(50% - 1.1px), #000 calc(50% - 1.1px), #000 calc(50% + 1.1px), transparent calc(50% + 1.1px))"></span></span><span style="display:inline-block;width:0.59em;text-align:center">4</span></div>
<div style="position:absolute;z-index:4;left:13.19px;top:736.50px;font-family:'Liberation Sans',sans-serif;font-weight:400;font-style:normal;font-size:27.96px;line-height:1;white-space:nowrap;color:#217346;transform:scaleX(0.9571);transform-origin:0 0;">10</div>
<div style="position:absolute;z-index:4;left:87.85px;top:771.30px;font-family:'Liberation Sans',sans-serif;font-weight:400;font-style:normal;font-size:27.51px;line-height:1;white-space:nowrap;color:#000;transform:scaleX(0.9273);transform-origin:0 0;-webkit-text-stroke:0.12px #000"><span style="display:inline-block;width:0.59em;text-align:center">2</span><span style="display:inline-block;width:0.59em;text-align:center">0</span><span style="display:inline-block;width:0.59em;text-align:center">0</span><span style="display:inline-block;width:0.59em;text-align:center">9</span><span style="display:inline-block;width:0.59em;text-align:center"><span style="display:inline-block;width:0.46em;height:0.8em;vertical-align:-0.04em;background:linear-gradient(to bottom right, transparent calc(50% - 1.1px), #000 calc(50% - 1.1px), #000 calc(50% + 1.1px), transparent calc(50% + 1.1px))"></span></span><span style="display:inline-block;width:0.59em;text-align:center">1</span><span style="display:inline-block;width:0.59em;text-align:center">1</span><span style="display:inline-block;width:0.59em;text-align:center"><span style="display:inline-block;width:0.46em;height:0.8em;vertical-align:-0.04em;background:linear-gradient(to bottom right, transparent calc(50% - 1.1px), #000 calc(50% - 1.1px), #000 calc(50% + 1.1px), transparent calc(50% + 1.1px))"></span></span><span style="display:inline-block;width:0.59em;text-align:center">5</span></div>
<div style="position:absolute;z-index:4;left:13.04px;top:770.50px;font-family:'Liberation Sans',sans-serif;font-weight:400;font-style:normal;font-size:27.96px;line-height:1;white-space:nowrap;color:#217346;transform:scaleX(1.0308);transform-origin:0 0;">11</div>
<div style="position:absolute;z-index:4;left:87.83px;top:805.30px;font-family:'Liberation Sans',sans-serif;font-weight:400;font-style:normal;font-size:27.51px;line-height:1;white-space:nowrap;color:#000;transform:scaleX(0.9338);transform-origin:0 0;-webkit-text-stroke:0.12px #000"><span style="display:inline-block;width:0.59em;text-align:center">2</span><span style="display:inline-block;width:0.59em;text-align:center">0</span><span style="display:inline-block;width:0.59em;text-align:center">0</span><span style="display:inline-block;width:0.59em;text-align:center">9</span><span style="display:inline-block;width:0.59em;text-align:center"><span style="display:inline-block;width:0.46em;height:0.8em;vertical-align:-0.04em;background:linear-gradient(to bottom right, transparent calc(50% - 1.1px), #000 calc(50% - 1.1px), #000 calc(50% + 1.1px), transparent calc(50% + 1.1px))"></span></span><span style="display:inline-block;width:0.59em;text-align:center">1</span><span style="display:inline-block;width:0.59em;text-align:center">1</span><span style="display:inline-block;width:0.59em;text-align:center"><span style="display:inline-block;width:0.46em;height:0.8em;vertical-align:-0.04em;background:linear-gradient(to bottom right, transparent calc(50% - 1.1px), #000 calc(50% - 1.1px), #000 calc(50% + 1.1px), transparent calc(50% + 1.1px))"></span></span><span style="display:inline-block;width:0.59em;text-align:center">6</span></div>
<div style="position:absolute;z-index:4;left:13.19px;top:804.50px;font-family:'Liberation Sans',sans-serif;font-weight:400;font-style:normal;font-size:27.96px;line-height:1;white-space:nowrap;color:#217346;transform:scaleX(0.9571);transform-origin:0 0;">12</div>
<div style="position:absolute;z-index:4;left:87.83px;top:839.30px;font-family:'Liberation Sans',sans-serif;font-weight:400;font-style:normal;font-size:27.51px;line-height:1;white-space:nowrap;color:#000;transform:scaleX(0.9338);transform-origin:0 0;-webkit-text-stroke:0.12px #000"><span style="display:inline-block;width:0.59em;text-align:center">2</span><span style="display:inline-block;width:0.59em;text-align:center">0</span><span style="display:inline-block;width:0.59em;text-align:center">0</span><span style="display:inline-block;width:0.59em;text-align:center">9</span><span style="display:inline-block;width:0.59em;text-align:center"><span style="display:inline-block;width:0.46em;height:0.8em;vertical-align:-0.04em;background:linear-gradient(to bottom right, transparent calc(50% - 1.1px), #000 calc(50% - 1.1px), #000 calc(50% + 1.1px), transparent calc(50% + 1.1px))"></span></span><span style="display:inline-block;width:0.59em;text-align:center">1</span><span style="display:inline-block;width:0.59em;text-align:center">1</span><span style="display:inline-block;width:0.59em;text-align:center"><span style="display:inline-block;width:0.46em;height:0.8em;vertical-align:-0.04em;background:linear-gradient(to bottom right, transparent calc(50% - 1.1px), #000 calc(50% - 1.1px), #000 calc(50% + 1.1px), transparent calc(50% + 1.1px))"></span></span><span style="display:inline-block;width:0.59em;text-align:center">7</span></div>
<div style="position:absolute;z-index:4;left:13.19px;top:838.50px;font-family:'Liberation Sans',sans-serif;font-weight:400;font-style:normal;font-size:27.96px;line-height:1;white-space:nowrap;color:#217346;transform:scaleX(0.9571);transform-origin:0 0;">13</div>
<div style="position:absolute;z-index:4;left:87.85px;top:873.30px;font-family:'Liberation Sans',sans-serif;font-weight:400;font-style:normal;font-size:27.51px;line-height:1;white-space:nowrap;color:#000;transform:scaleX(0.9273);transform-origin:0 0;-webkit-text-stroke:0.12px #000"><span style="display:inline-block;width:0.59em;text-align:center">2</span><span style="display:inline-block;width:0.59em;text-align:center">0</span><span style="display:inline-block;width:0.59em;text-align:center">0</span><span style="display:inline-block;width:0.59em;text-align:center">9</span><span style="display:inline-block;width:0.59em;text-align:center"><span style="display:inline-block;width:0.46em;height:0.8em;vertical-align:-0.04em;background:linear-gradient(to bottom right, transparent calc(50% - 1.1px), #000 calc(50% - 1.1px), #000 calc(50% + 1.1px), transparent calc(50% + 1.1px))"></span></span><span style="display:inline-block;width:0.59em;text-align:center">1</span><span style="display:inline-block;width:0.59em;text-align:center">1</span><span style="display:inline-block;width:0.59em;text-align:center"><span style="display:inline-block;width:0.46em;height:0.8em;vertical-align:-0.04em;background:linear-gradient(to bottom right, transparent calc(50% - 1.1px), #000 calc(50% - 1.1px), #000 calc(50% + 1.1px), transparent calc(50% + 1.1px))"></span></span><span style="display:inline-block;width:0.59em;text-align:center">8</span></div>
<div style="position:absolute;z-index:4;left:13.19px;top:872.50px;font-family:'Liberation Sans',sans-serif;font-weight:400;font-style:normal;font-size:27.96px;line-height:1;white-space:nowrap;color:#217346;transform:scaleX(0.9571);transform-origin:0 0;">14</div>
<div style="position:absolute;z-index:4;left:87.83px;top:907.30px;font-family:'Liberation Sans',sans-serif;font-weight:400;font-style:normal;font-size:27.51px;line-height:1;white-space:nowrap;color:#000;transform:scaleX(0.9338);transform-origin:0 0;-webkit-text-stroke:0.12px #000"><span style="display:inline-block;width:0.59em;text-align:center">2</span><span style="display:inline-block;width:0.59em;text-align:center">0</span><span style="display:inline-block;width:0.59em;text-align:center">0</span><span style="display:inline-block;width:0.59em;text-align:center">9</span><span style="display:inline-block;width:0.59em;text-align:center"><span style="display:inline-block;width:0.46em;height:0.8em;vertical-align:-0.04em;background:linear-gradient(to bottom right, transparent calc(50% - 1.1px), #000 calc(50% - 1.1px), #000 calc(50% + 1.1px), transparent calc(50% + 1.1px))"></span></span><span style="display:inline-block;width:0.59em;text-align:center">1</span><span style="display:inline-block;width:0.59em;text-align:center">1</span><span style="display:inline-block;width:0.59em;text-align:center"><span style="display:inline-block;width:0.46em;height:0.8em;vertical-align:-0.04em;background:linear-gradient(to bottom right, transparent calc(50% - 1.1px), #000 calc(50% - 1.1px), #000 calc(50% + 1.1px), transparent calc(50% + 1.1px))"></span></span><span style="display:inline-block;width:0.59em;text-align:center">9</span></div>
<div style="position:absolute;z-index:4;left:13.19px;top:906.50px;font-family:'Liberation Sans',sans-serif;font-weight:400;font-style:normal;font-size:27.96px;line-height:1;white-space:nowrap;color:#217346;transform:scaleX(0.9571);transform-origin:0 0;">15</div>
<div style="position:absolute;z-index:4;left:73.65px;top:941.30px;font-family:'Liberation Sans',sans-serif;font-weight:400;font-style:normal;font-size:27.51px;line-height:1;white-space:nowrap;color:#000;transform:scaleX(0.9233);transform-origin:0 0;-webkit-text-stroke:0.12px #000"><span style="display:inline-block;width:0.59em;text-align:center">2</span><span style="display:inline-block;width:0.59em;text-align:center">0</span><span style="display:inline-block;width:0.59em;text-align:center">0</span><span style="display:inline-block;width:0.59em;text-align:center">9</span><span style="display:inline-block;width:0.59em;text-align:center"><span style="display:inline-block;width:0.46em;height:0.8em;vertical-align:-0.04em;background:linear-gradient(to bottom right, transparent calc(50% - 1.1px), #000 calc(50% - 1.1px), #000 calc(50% + 1.1px), transparent calc(50% + 1.1px))"></span></span><span style="display:inline-block;width:0.59em;text-align:center">1</span><span style="display:inline-block;width:0.59em;text-align:center">1</span><span style="display:inline-block;width:0.59em;text-align:center"><span style="display:inline-block;width:0.46em;height:0.8em;vertical-align:-0.04em;background:linear-gradient(to bottom right, transparent calc(50% - 1.1px), #000 calc(50% - 1.1px), #000 calc(50% + 1.1px), transparent calc(50% + 1.1px))"></span></span><span style="display:inline-block;width:0.59em;text-align:center">1</span><span style="display:inline-block;width:0.59em;text-align:center">0</span></div>
<div style="position:absolute;z-index:4;left:13.19px;top:940.50px;font-family:'Liberation Sans',sans-serif;font-weight:400;font-style:normal;font-size:27.96px;line-height:1;white-space:nowrap;color:#217346;transform:scaleX(0.9571);transform-origin:0 0;">16</div>
<div style="position:absolute;z-index:4;left:73.65px;top:975.30px;font-family:'Liberation Sans',sans-serif;font-weight:400;font-style:normal;font-size:27.51px;line-height:1;white-space:nowrap;color:#000;transform:scaleX(0.9233);transform-origin:0 0;-webkit-text-stroke:0.12px #000"><span style="display:inline-block;width:0.59em;text-align:center">2</span><span style="display:inline-block;width:0.59em;text-align:center">0</span><span style="display:inline-block;width:0.59em;text-align:center">0</span><span style="display:inline-block;width:0.59em;text-align:center">9</span><span style="display:inline-block;width:0.59em;text-align:center"><span style="display:inline-block;width:0.46em;height:0.8em;vertical-align:-0.04em;background:linear-gradient(to bottom right, transparent calc(50% - 1.1px), #000 calc(50% - 1.1px), #000 calc(50% + 1.1px), transparent calc(50% + 1.1px))"></span></span><span style="display:inline-block;width:0.59em;text-align:center">1</span><span style="display:inline-block;width:0.59em;text-align:center">1</span><span style="display:inline-block;width:0.59em;text-align:center"><span style="display:inline-block;width:0.46em;height:0.8em;vertical-align:-0.04em;background:linear-gradient(to bottom right, transparent calc(50% - 1.1px), #000 calc(50% - 1.1px), #000 calc(50% + 1.1px), transparent calc(50% + 1.1px))"></span></span><span style="display:inline-block;width:0.59em;text-align:center">1</span><span style="display:inline-block;width:0.59em;text-align:center">1</span></div>
<div style="position:absolute;z-index:4;left:13.19px;top:974.50px;font-family:'Liberation Sans',sans-serif;font-weight:400;font-style:normal;font-size:27.96px;line-height:1;white-space:nowrap;color:#217346;transform:scaleX(0.9571);transform-origin:0 0;">17</div>
<div style="position:absolute;z-index:4;left:507.62px;top:204.70px;font-family:'Liberation Sans',sans-serif;font-weight:400;font-style:normal;font-size:9.51px;line-height:1;white-space:nowrap;color:#555;transform:scaleX(1.3750);transform-origin:0 0;">ア</div>
<div style="position:absolute;z-index:4;left:507.00px;top:218.00px;font-family:'Liberation Sans',sans-serif;font-weight:400;font-style:normal;font-size:17.34px;line-height:1;white-space:nowrap;color:#555;transform:scaleX(0.9188);transform-origin:0 0;">亜</div>
<div style="position:absolute;z-index:4;left:985.56px;top:204.00px;font-family:'Liberation Sans',sans-serif;font-weight:400;font-style:normal;font-size:16.28px;line-height:1;white-space:nowrap;color:#555;transform:scaleX(1.4417);transform-origin:0 0;">.0</div>
<div style="position:absolute;z-index:4;left:977.69px;top:219.30px;font-family:'Liberation Sans',sans-serif;font-weight:400;font-style:normal;font-size:17.11px;line-height:1;white-space:nowrap;color:#555;transform:scaleX(1.1571);transform-origin:0 0;">.00</div>
<div style="position:absolute;z-index:4;left:1016.85px;top:204.00px;font-family:'Liberation Sans',sans-serif;font-weight:400;font-style:normal;font-size:16.28px;line-height:1;white-space:nowrap;color:#555;transform:scaleX(1.1524);transform-origin:0 0;">.00</div>
<div style="position:absolute;z-index:4;left:1022.13px;top:219.30px;font-family:'Liberation Sans',sans-serif;font-weight:400;font-style:normal;font-size:17.11px;line-height:1;white-space:nowrap;color:#555;transform:scaleX(1.4333);transform-origin:0 0;">.0</div>
<div style="position:absolute;z-index:4;left:1595.70px;top:133.00px;font-family:'Liberation Sans',sans-serif;font-weight:400;font-style:normal;font-size:30.04px;line-height:1;white-space:nowrap;color:#4a7ebb;transform:scaleX(0.9450);transform-origin:0 0;-webkit-text-stroke:0.7px #4a7ebb">A</div>
<div style="position:absolute;z-index:4;left:1595.65px;top:160.20px;font-family:'Liberation Sans',sans-serif;font-weight:400;font-style:normal;font-size:33.60px;line-height:1;white-space:nowrap;color:#9b5fc0;transform:scaleX(0.9474);transform-origin:0 0;-webkit-text-stroke:0.7px #9b5fc0">Z</div>
<div style="position:absolute;z-index:5;left:140px;top:1000px;width:1px;height:33px;background:#c6c6c6"></div>
<div style="position:absolute;z-index:5;left:263px;top:996px;width:124px;height:37px;background:#fff"></div>
<div style="position:absolute;z-index:5;left:508px;top:1000px;width:1px;height:33px;background:#c6c6c6"></div>
<div style="position:absolute;z-index:5;left:1198px;top:1000px;width:729px;height:33px;background:#dadada"></div>
<div style="position:absolute;z-index:5;left:1436px;top:1038px;width:52px;height:44px;background:#d4d4d4"></div>
<svg style="position:absolute;z-index:5;left:0;top:0;pointer-events:none" width="1966" height="1082" viewBox="0 0 1966 1082"><g transform="translate(0,0)" stroke-linejoin="round">
<polygon points="1250.7,149.7 1250.7,165.3 1242,173 1235.8,166.9" fill="#808080" stroke="#f1f1f1" stroke-width="1.6"/>
<polygon points="1234.5,168.2 1240.3,174.3 1233.9,179.8 1228.7,174.7" fill="#808080" stroke="#f1f1f1" stroke-width="1.6"/>
<path d="M1205.4,194.7 L1217.5,182 Q1221,177.5 1225.5,177.5 A7.5 7.5 0 0 1 1233,185 Q1233,194.7 1221,194.7 Z" fill="#4a7ebb" stroke="#f1f1f1" stroke-width="1.6"/>
<path d="M1219.5,182.6 Q1222,179.3 1225.7,179.2 A5.8 5.8 0 0 1 1231.3,185.3 Q1231,189 1228.2,191.5 Q1227,184 1219.5,182.6 Z" fill="#fff"/>
</g><g transform="translate(115.5,0.3)" stroke-linejoin="round">
<polygon points="1250.7,149.7 1250.7,165.3 1242,173 1235.8,166.9" fill="#808080" stroke="#f1f1f1" stroke-width="1.6"/>
<polygon points="1234.5,168.2 1240.3,174.3 1233.9,179.8 1228.7,174.7" fill="#808080" stroke="#f1f1f1" stroke-width="1.6"/>
<path d="M1205.4,194.7 L1217.5,182 Q1221,177.5 1225.5,177.5 A7.5 7.5 0 0 1 1233,185 Q1233,194.7 1221,194.7 Z" fill="#4a7ebb" stroke="#f1f1f1" stroke-width="1.6"/>
<path d="M1219.5,182.6 Q1222,179.3 1225.7,179.2 A5.8 5.8 0 0 1 1231.3,185.3 Q1231,189 1228.2,191.5 Q1227,184 1219.5,182.6 Z" fill="#fff"/>
</g></svg>
<div style="position:absolute;z-index:5;left:41.59px;top:20.60px;font-family:'Liberation Sans',sans-serif;font-weight:400;font-style:normal;font-size:22.22px;line-height:1;white-space:nowrap;color:#5f9b74;transform:scaleX(1.1036);transform-origin:0 0;">自動保存</div>
<div style="position:absolute;z-index:5;left:180.54px;top:20.00px;font-family:'Liberation Sans',sans-serif;font-weight:400;font-style:normal;font-size:21.32px;line-height:1;white-space:nowrap;color:#5f9b74;transform:scaleX(0.7289);transform-origin:0 0;">オフ</div>
<div style="position:absolute;z-index:5;left:908.81px;top:18.80px;font-family:'Liberation Sans',sans-serif;font-weight:400;font-style:normal;font-size:27.91px;line-height:1;white-space:nowrap;color:#b6dbc1;transform:scaleX(0.8956);transform-origin:0 0;">Ex4</div>
<div style="position:absolute;z-index:5;left:994.71px;top:20.20px;font-family:'Liberation Sans',sans-serif;font-weight:400;font-style:normal;font-size:24.81px;line-height:1;white-space:nowrap;color:#b6dbc1;transform:scaleX(0.9930);transform-origin:0 0;">Excel</div>
<div style="position:absolute;z-index:5;left:1539.84px;top:17.90px;font-family:'Liberation Sans',sans-serif;font-weight:400;font-style:normal;font-size:20.80px;line-height:1;white-space:nowrap;color:#c2dcc8;transform:scaleX(1.1646);transform-origin:0 0;">新居雅行</div>
<div style="position:absolute;z-index:5;left:25.40px;top:82.60px;font-family:'Liberation Sans',sans-serif;font-weight:400;font-style:normal;font-size:23.29px;line-height:1;white-space:nowrap;color:#fff;transform:scaleX(0.6978);transform-origin:0 0;">ファイル</div>
<div style="position:absolute;z-index:5;left:150.50px;top:81.00px;font-family:'Liberation Sans',sans-serif;font-weight:400;font-style:normal;font-size:25.00px;line-height:1;white-space:nowrap;color:#217346;transform:scaleX(0.8041);transform-origin:0 0;">ホーム</div>
<div style="position:absolute;z-index:5;left:267.30px;top:83.00px;font-family:'Liberation Sans',sans-serif;font-weight:400;font-style:normal;font-size:21.20px;line-height:1;white-space:nowrap;color:#fff;transform:scaleX(1.1390);transform-origin:0 0;">挿入</div>
<div style="position:absolute;z-index:5;left:370.01px;top:82.00px;font-family:'Liberation Sans',sans-serif;font-weight:400;font-style:normal;font-size:23.97px;line-height:1;white-space:nowrap;color:#fff;transform:scaleX(0.7889);transform-origin:0 0;">ページ レイアウト</div>
<div style="position:absolute;z-index:5;left:582.24px;top:84.30px;font-family:'Liberation Sans',sans-serif;font-weight:400;font-style:normal;font-size:22.90px;line-height:1;white-space:nowrap;color:#fff;transform:scaleX(1.0614);transform-origin:0 0;">数式</div>
<div style="position:absolute;z-index:5;left:686.07px;top:82.30px;font-family:'Liberation Sans',sans-serif;font-weight:400;font-style:normal;font-size:23.85px;line-height:1;white-space:nowrap;color:#fff;transform:scaleX(0.8324);transform-origin:0 0;">データ</div>
<div style="position:absolute;z-index:5;left:799.50px;top:84.30px;font-family:'Liberation Sans',sans-serif;font-weight:400;font-style:normal;font-size:22.02px;line-height:1;white-space:nowrap;color:#fff;transform:scaleX(1.0930);transform-origin:0 0;">校閲</div>
<div style="position:absolute;z-index:5;left:902.82px;top:84.30px;font-family:'Liberation Sans',sans-serif;font-weight:400;font-style:normal;font-size:22.90px;line-height:1;white-space:nowrap;color:#fff;transform:scaleX(1.0795);transform-origin:0 0;">表示</div>
<div style="position:absolute;z-index:5;left:1006.74px;top:82.30px;font-family:'Liberation Sans',sans-serif;font-weight:400;font-style:normal;font-size:23.85px;line-height:1;white-space:nowrap;color:#fff;transform:scaleX(0.7316);transform-origin:0 0;">アドイン</div>
<div style="position:absolute;z-index:5;left:1134.40px;top:81.40px;font-family:'Liberation Sans',sans-serif;font-weight:400;font-style:normal;font-size:28.83px;line-height:1;white-space:nowrap;color:#fff;transform:scaleX(0.8102);transform-origin:0 0;">ACROBAT</div>
<div style="position:absolute;z-index:5;left:1301.04px;top:80.30px;font-family:'Liberation Sans',sans-serif;font-weight:400;font-style:normal;font-size:26.02px;line-height:1;white-space:nowrap;color:#fff;transform:scaleX(0.7645);transform-origin:0 0;">チーム</div>
<div style="position:absolute;z-index:5;left:1436.18px;top:84.00px;font-family:'Liberation Sans',sans-serif;font-weight:400;font-style:normal;font-size:24.00px;line-height:1;white-space:nowrap;color:#d9e8dd;transform:scaleX(0.8248);transform-origin:0 0;">実行したい作業を入力してください</div>
<div style="position:absolute;z-index:5;left:1909.70px;top:84.00px;font-family:'Liberation Sans',sans-serif;font-weight:400;font-style:normal;font-size:22.05px;line-height:1;white-space:nowrap;color:#fff;transform:scaleX(1.1163);transform-origin:0 0;">共有</div>
<div style="position:absolute;z-index:5;left:9.50px;top:205.00px;font-family:'Liberation Sans',sans-serif;font-weight:400;font-style:normal;font-size:21.40px;line-height:1;white-space:nowrap;color:#444;transform:scaleX(0.9963);transform-origin:0 0;">貼り付け</div>
<div style="position:absolute;z-index:5;left:2.75px;top:269.20px;font-family:'Liberation Sans',sans-serif;font-weight:400;font-style:normal;font-size:23.65px;line-height:1;white-space:nowrap;color:#595959;transform:scaleX(0.7168);transform-origin:0 0;">クリップボード</div>
<div style="position:absolute;z-index:5;left:408.48px;top:154.00px;font-family:'Liberation Sans',sans-serif;font-weight:400;font-style:normal;font-size:27.00px;line-height:1;white-space:nowrap;color:#808080;transform:scaleX(1.0080);transform-origin:0 0;">11</div>
<div style="position:absolute;z-index:5;left:834.95px;top:154.40px;font-family:'Liberation Sans',sans-serif;font-weight:400;font-style:normal;font-size:22.02px;line-height:1;white-space:nowrap;color:#8a8a8a;transform:scaleX(1.1150);transform-origin:0 0;">日付</div>
<div style="position:absolute;z-index:5;left:171.87px;top:202.90px;font-family:'Liberation Sans',sans-serif;font-weight:700;font-style:normal;font-size:30.62px;line-height:1;white-space:nowrap;color:#a6a6a6;transform:scaleX(0.8632);transform-origin:0 0;">B</div>
<div style="position:absolute;z-index:5;left:211.50px;top:201.00px;font-family:'Liberation Serif',serif;font-weight:400;font-style:italic;font-size:32.12px;line-height:1;white-space:nowrap;color:#a6a6a6;transform:scaleX(1.2917);transform-origin:0 0;">I</div>
<div style="position:absolute;z-index:5;left:245.62px;top:203.00px;font-family:'Liberation Sans',sans-serif;font-weight:400;font-style:normal;font-size:27.96px;line-height:1;white-space:nowrap;color:#a6a6a6;transform:scaleX(1.1875);transform-origin:0 0;">U</div>
<div style="position:absolute;z-index:5;left:437.00px;top:202.90px;font-family:'Liberation Sans',sans-serif;font-weight:400;font-style:normal;font-size:30.62px;line-height:1;white-space:nowrap;color:#a6a6a6;transform:scaleX(0.9500);transform-origin:0 0;">A</div>
<div style="position:absolute;z-index:5;left:484.70px;top:154.40px;font-family:'Liberation Sans',sans-serif;font-weight:400;font-style:normal;font-size:24.01px;line-height:1;white-space:nowrap;color:#a6a6a6;transform:scaleX(0.8938);transform-origin:0 0;">A</div>
<div style="position:absolute;z-index:5;left:525.00px;top:159.00px;font-family:'Liberation Sans',sans-serif;font-weight:400;font-style:normal;font-size:17.07px;line-height:1;white-space:nowrap;color:#a6a6a6;transform:scaleX(1.1091);transform-origin:0 0;">A</div>
<div style="position:absolute;z-index:5;left:889.31px;top:201.50px;font-family:'Liberation Sans',sans-serif;font-weight:400;font-style:normal;font-size:34.11px;line-height:1;white-space:nowrap;color:#555;transform:scaleX(0.8857);transform-origin:0 0;">%</div>
<div style="position:absolute;z-index:5;left:1059.31px;top:202.00px;font-family:'Liberation Sans',sans-serif;font-weight:400;font-style:normal;font-size:21.60px;line-height:1;white-space:nowrap;color:#444;transform:scaleX(1.0927);transform-origin:0 0;">条件付き</div>
<div style="position:absolute;z-index:5;left:1072.26px;top:233.00px;font-family:'Liberation Sans',sans-serif;font-weight:400;font-style:normal;font-size:22.90px;line-height:1;white-space:nowrap;color:#444;transform:scaleX(1.0432);transform-origin:0 0;">書式</div>
<div style="position:absolute;z-index:5;left:1154.83px;top:205.20px;font-family:'Liberation Sans',sans-serif;font-weight:400;font-style:normal;font-size:18.80px;line-height:1;white-space:nowrap;color:#444;transform:scaleX(0.9692);transform-origin:0 0;">テーブルとして</div>
<div style="position:absolute;z-index:5;left:1162.20px;top:233.00px;font-family:'Liberation Sans',sans-serif;font-weight:400;font-style:normal;font-size:22.02px;line-height:1;white-space:nowrap;color:#444;transform:scaleX(1.0988);transform-origin:0 0;">書式設定</div>
<div style="position:absolute;z-index:5;left:1303.60px;top:200.20px;font-family:'Liberation Sans',sans-serif;font-weight:400;font-style:normal;font-size:25.79px;line-height:1;white-space:nowrap;color:#444;transform:scaleX(0.7519);transform-origin:0 0;">セルの</div>
<div style="position:absolute;z-index:5;left:1288.05px;top:231.00px;font-family:'Liberation Sans',sans-serif;font-weight:400;font-style:normal;font-size:23.85px;line-height:1;white-space:nowrap;color:#444;transform:scaleX(0.7227);transform-origin:0 0;">スタイル</div>
<div style="position:absolute;z-index:5;left:1429.50px;top:137.60px;font-family:'Liberation Sans',sans-serif;font-weight:400;font-style:normal;font-size:21.46px;line-height:1;white-space:nowrap;color:#444;transform:scaleX(1.1220);transform-origin:0 0;">挿入</div>
<div style="position:absolute;z-index:5;left:1428.70px;top:175.60px;font-family:'Liberation Sans',sans-serif;font-weight:400;font-style:normal;font-size:21.84px;line-height:1;white-space:nowrap;color:#444;transform:scaleX(1.0952);transform-origin:0 0;">削除</div>
<div style="position:absolute;z-index:5;left:1429.80px;top:214.90px;font-family:'Liberation Sans',sans-serif;font-weight:400;font-style:normal;font-size:23.76px;line-height:1;white-space:nowrap;color:#444;transform:scaleX(0.9787);transform-origin:0 0;">書式</div>
<div style="position:absolute;z-index:5;left:1573.40px;top:201.30px;font-family:'Liberation Sans',sans-serif;font-weight:400;font-style:normal;font-size:19.40px;line-height:1;white-space:nowrap;color:#444;transform:scaleX(1.0945);transform-origin:0 0;">並べ替えと</div>
<div style="position:absolute;z-index:5;left:1570.55px;top:231.20px;font-family:'Liberation Sans',sans-serif;font-weight:400;font-style:normal;font-size:23.41px;line-height:1;white-space:nowrap;color:#444;transform:scaleX(0.7270);transform-origin:0 0;">フィルター</div>
<div style="position:absolute;z-index:5;left:1684.20px;top:202.00px;font-family:'Liberation Sans',sans-serif;font-weight:400;font-style:normal;font-size:20.00px;line-height:1;white-space:nowrap;color:#444;transform:scaleX(1.1107);transform-origin:0 0;">検索と</div>
<div style="position:absolute;z-index:5;left:1682.50px;top:233.00px;font-family:'Liberation Sans',sans-serif;font-weight:400;font-style:normal;font-size:22.05px;line-height:1;white-space:nowrap;color:#444;transform:scaleX(1.1048);transform-origin:0 0;">選択</div>
<div style="position:absolute;z-index:5;left:19.30px;top:332.30px;font-family:'Liberation Sans',sans-serif;font-weight:400;font-style:normal;font-size:32.72px;line-height:1;white-space:nowrap;color:#444;transform:scaleX(0.8077);transform-origin:0 0;">A1</div>
<div style="position:absolute;z-index:5;left:133.20px;top:396.30px;font-family:'Liberation Sans',sans-serif;font-weight:400;font-style:normal;font-size:27.39px;line-height:1;white-space:nowrap;color:#217346;transform:scaleX(0.9833);transform-origin:0 0;">A</div>
<div style="position:absolute;z-index:6;left:263px;top:1031px;width:124px;height:3px;background:#217346"></div>
<svg style="position:absolute;z-index:6;left:33px;top:1009px" width="10" height="15" viewBox="0 0 10 15"><polygon points="10,0 10,15 0,7.5" fill="#c0c0c0"/></svg>
<svg style="position:absolute;z-index:6;left:75px;top:1009px" width="9" height="15" viewBox="0 0 9 15"><polygon points="0,0 9,7.5 0,15" fill="#c0c0c0"/></svg>
<svg style="position:absolute;z-index:6;left:554px;top:1002px" width="33" height="33" viewBox="0 0 33 33"><circle cx="16.5" cy="16.5" r="15" fill="none" stroke="#666" stroke-width="2"/><rect x="9" y="15" width="15" height="3" fill="#666"/><rect x="15" y="9" width="3" height="15" fill="#666"/></svg>
<div style="position:absolute;z-index:6;left:1173.5px;top:1006px;width:4px;height:4px;background:#b0b0b0"></div>
<div style="position:absolute;z-index:6;left:1173.5px;top:1014px;width:4px;height:4px;background:#b0b0b0"></div>
<div style="position:absolute;z-index:6;left:1173.5px;top:1022px;width:4px;height:4px;background:#b0b0b0"></div>
<div style="position:absolute;z-index:6;left:1198px;top:1000px;width:33px;height:33px;background:#fff;border:1px solid #c6c6c6;box-sizing:border-box"></div>
<div style="position:absolute;z-index:6;left:1230px;top:1000px;width:614px;height:33px;background:#fff;border:1px solid #c6c6c6;box-sizing:border-box"></div>
<div style="position:absolute;z-index:6;left:1894px;top:1000px;width:33px;height:33px;background:#fff;border:1px solid #c6c6c6;box-sizing:border-box"></div>
<div style="position:absolute;z-index:6;left:1601px;top:1056.5px;width:11px;height:3.5px;background:#555"></div>
<div style="position:absolute;z-index:6;left:1622px;top:1058px;width:197px;height:1.5px;background:#8a8a8a"></div>
<div style="position:absolute;z-index:6;left:1717px;top:1048px;width:8px;height:22px;background:#555"></div>
<div style="position:absolute;z-index:6;left:1829px;top:1056.5px;width:15px;height:3.5px;background:#555"></div>
<div style="position:absolute;z-index:6;left:1834.8px;top:1050.5px;width:3.5px;height:15.5px;background:#555"></div>
<svg style="position:absolute;z-index:6;left:0;top:0;pointer-events:none" width="1966" height="1082" viewBox="0 0 1966 1082">
<rect x="254" y="18.8" width="25" height="25" rx="1.5" fill="#f0f0f0"/>
<rect x="258" y="20.3" width="17" height="11.3" fill="#217346"/>
<rect x="260" y="36" width="11" height="8" fill="#217346"/>
<rect x="262.2" y="37.6" width="3" height="6.4" fill="#f0f0f0"/>
<path d="M320.5,19.5 L312.5,26.2 L320.5,33" fill="none" stroke="#f0f0f0" stroke-width="4.2"/>
<path d="M313,26.2 L326,26.2 A8 8 0 0 1 326,42.2" fill="none" stroke="#f0f0f0" stroke-width="4.2"/>
<polygon points="351.7,28.7 361,28.7 356.35,34" fill="#f0f0f0"/>
<path d="M395.2,19.5 L403.2,26.2 L395.2,33" fill="none" stroke="#5f9b74" stroke-width="4.2"/>
<path d="M402.7,26.2 L389.7,26.2 A8 8 0 0 0 389.7,42.2" fill="none" stroke="#5f9b74" stroke-width="4.2"/>
<polygon points="421,28.7 430,28.7 425.5,34" fill="#5f9b74"/>
<rect x="456.7" y="25.6" width="9.4" height="1.5" fill="#f0f0f0"/>
<polygon points="456.7,29.9 466.1,29.9 461.4,35.2" fill="#f0f0f0"/>
<g fill="none" stroke="#6ea583" stroke-width="1.9">
<rect x="1684" y="18.9" width="22" height="18.2"/>
<line x1="1684" y1="22.9" x2="1706" y2="22.9"/>
<path d="M1690,30.4 L1695,25.4 L1700,30.4 M1695,25.4 L1695,37"/>
</g>
<g fill="none" stroke="#8fbb9d" stroke-width="1.6">
<line x1="1762" y1="27.8" x2="1782" y2="27.8"/>
<rect x="1840.2" y="19.1" width="18" height="18"/>
<path d="M1916.5,18.5 L1935.5,37.5 M1935.5,18.5 L1916.5,37.5"/>
</g>
<g fill="none" stroke="#fff" stroke-width="1.5">
<path d="M1413.9,104 L1413.9,99 C1413.2,95.5 1408.6,93 1408.6,88.6 A8.85 8.85 0 1 1 1426.3,88.6 C1426.3,93 1421.9,95.5 1421.1,99 L1421.1,104"/>
</g>
<rect x="1413.3" y="103" width="8.3" height="2.8" fill="#fff"/>
<rect x="1414" y="107" width="7" height="1.2" fill="#fff"/>
<g fill="none" stroke="#fff" stroke-width="2.1">
<circle cx="1880" cy="88.8" r="6.8"/>
<path d="M1869,108.6 A12.5 12.5 0 0 1 1884.5,96.5"/>
<path d="M1888,95.3 L1888,110.8 M1880,103 L1896,103"/>
</g>
</svg>
<div style="position:absolute;z-index:6;left:154.56px;top:1001.30px;font-family:'Liberation Sans',sans-serif;font-weight:400;font-style:normal;font-size:27.96px;line-height:1;white-space:nowrap;color:#444;transform:scaleX(1.0395);transform-origin:0 0;">Sheet1</div>
<div style="position:absolute;z-index:6;left:277.34px;top:1001.30px;font-family:'Liberation Sans',sans-serif;font-weight:400;font-style:normal;font-size:27.96px;line-height:1;white-space:nowrap;color:#217346;transform:scaleX(1.0558);transform-origin:0 0;">Sheet2</div>
<div style="position:absolute;z-index:6;left:400.50px;top:1001.60px;font-family:'Liberation Sans',sans-serif;font-weight:400;font-style:normal;font-size:26.84px;line-height:1;white-space:nowrap;color:#444;transform:scaleX(1.1012);transform-origin:0 0;">Sheet3</div>
<div style="position:absolute;z-index:6;left:9.80px;top:1046.80px;font-family:'Liberation Sans',sans-serif;font-weight:400;font-style:normal;font-size:21.20px;line-height:1;white-space:nowrap;color:#555;transform:scaleX(1.1506);transform-origin:0 0;">準備完了</div>
<div style="position:absolute;z-index:6;left:790.50px;top:1048.20px;font-family:'Liberation Sans',sans-serif;font-weight:400;font-style:normal;font-size:23.11px;line-height:1;white-space:nowrap;color:#555;transform:scaleX(1.1240);transform-origin:0 0;">平均:</div>
<div style="position:absolute;z-index:6;left:855.49px;top:1046.20px;font-family:'Liberation Sans',sans-serif;font-weight:400;font-style:normal;font-size:26.32px;line-height:1;white-space:nowrap;color:#555;transform:scaleX(1.1062);transform-origin:0 0;">2009/11/7</div>
<div style="position:absolute;z-index:6;left:1013.04px;top:1048.20px;font-family:'Liberation Sans',sans-serif;font-weight:400;font-style:normal;font-size:22.22px;line-height:1;white-space:nowrap;color:#555;transform:scaleX(0.9630);transform-origin:0 0;">データの個数:</div>
<div style="position:absolute;z-index:6;left:1156.93px;top:1047.80px;font-family:'Liberation Sans',sans-serif;font-weight:400;font-style:normal;font-size:24.65px;line-height:1;white-space:nowrap;color:#555;transform:scaleX(1.0731);transform-origin:0 0;">26</div>
<div style="position:absolute;z-index:6;left:1202.54px;top:1049.20px;font-family:'Liberation Sans',sans-serif;font-weight:400;font-style:normal;font-size:21.40px;line-height:1;white-space:nowrap;color:#555;transform:scaleX(1.1622);transform-origin:0 0;">合計:</div>
<div style="position:absolute;z-index:6;left:1268.11px;top:1046.20px;font-family:'Liberation Sans',sans-serif;font-weight:400;font-style:normal;font-size:26.32px;line-height:1;white-space:nowrap;color:#555;transform:scaleX(1.0861);transform-origin:0 0;">4756/4/13</div>
<div style="position:absolute;z-index:6;left:1864.43px;top:1046.30px;font-family:'Liberation Sans',sans-serif;font-weight:400;font-style:normal;font-size:26.11px;line-height:1;white-space:nowrap;color:#555;transform:scaleX(1.0328);transform-origin:0 0;">100%</div>
<svg style="position:absolute;z-index:7;left:1209px;top:1009px" width="9" height="15" viewBox="0 0 9 15"><polygon points="9,0 9,15 0,7.5" fill="#6d6d6d"/></svg>
<svg style="position:absolute;z-index:7;left:1906px;top:1009px" width="9" height="15" viewBox="0 0 9 15"><polygon points="0,0 9,7.5 0,15" fill="#6d6d6d"/></svg>
<svg style="position:absolute;z-index:7;left:0;top:0;pointer-events:none" width="1966" height="1082" viewBox="0 0 1966 1082">
<rect x="1449.5" y="1046.5" width="25.0" height="24.0" fill="none" stroke="#6d6d6d" stroke-width="1.1"/><line x1="1457.8333333333333" y1="1046.5" x2="1457.8333333333333" y2="1070.5" stroke="#6d6d6d" stroke-width="1.1"/><line x1="1466.1666666666667" y1="1046.5" x2="1466.1666666666667" y2="1070.5" stroke="#6d6d6d" stroke-width="1.1"/><line x1="1449.5" y1="1054.5" x2="1474.5" y2="1054.5" stroke="#6d6d6d" stroke-width="1.1"/><line x1="1449.5" y1="1062.5" x2="1474.5" y2="1062.5" stroke="#6d6d6d" stroke-width="1.1"/>
<rect x="1501.5" y="1047" width="25" height="23" fill="none" stroke="#6d6d6d" stroke-width="1.1"/>
<rect x="1506.5" y="1050" width="15" height="17" fill="none" stroke="#6d6d6d" stroke-width="1.1"/>
<path d="M1509,1054 h10 M1509,1057 h10 M1509,1060 h10 M1509,1063 h10" stroke="#6d6d6d" stroke-width="1"/>
<rect x="1553.5" y="1047" width="25" height="23" fill="none" stroke="#6d6d6d" stroke-width="1.1"/>
<path d="M1561.5,1047 L1561.5,1061 M1553.5,1061 L1570.5,1061 L1570.5,1047" fill="none" stroke="#6d6d6d" stroke-width="1.1"/>
</svg>
<div style="position:absolute;z-index:10;left:279px;top:261px;width:1618px;height:569px;box-shadow:0 3px 14px 4px rgba(0,0,0,0.22)"></div>
<div style="position:absolute;z-index:11;left:279px;top:261px;width:1618px;height:569px;background:#f0f0f0;border:2px solid #d3803f;box-sizing:border-box"></div>
<div style="position:absolute;z-index:12;left:281px;top:263px;width:1614px;height:55px;background:#fff"></div>
<div style="position:absolute;z-index:12;left:539px;top:333px;width:420px;height:38px;background:#fff;border:1px solid #adadad;box-sizing:border-box"></div>
<div style="position:absolute;z-index:12;left:294px;top:379px;width:1588px;height:374px;border:1px solid #646464;box-sizing:border-box"></div>
<div style="position:absolute;z-index:12;left:294px;top:436px;width:1588px;height:317px;background:#fff;border-left:2px solid #62666b;border-bottom:2px solid #62666b;border-right:2px solid #62666b;border-top:1px solid #7a7f87;box-sizing:border-box"></div>
<div style="position:absolute;z-index:13;left:923px;top:336px;width:34px;height:33px;background:#e1e1e1;border:1px solid #adadad;box-sizing:border-box"></div>
<div style="position:absolute;z-index:13;left:297px;top:382px;width:257px;height:52px;background:#e1e1e1;border:1px solid #adadad;box-sizing:border-box"></div>
<div style="position:absolute;z-index:13;left:576px;top:382px;width:257px;height:52px;background:#e1e1e1;border:1px solid #adadad;box-sizing:border-box"></div>
<div style="position:absolute;z-index:13;left:855px;top:382px;width:257px;height:52px;background:#e1e1e1;border:1px solid #adadad;box-sizing:border-box"></div>
<div style="position:absolute;z-index:13;left:1134px;top:382px;width:52px;height:52px;background:#e1e1e1;border:1px solid #adadad;box-sizing:border-box"></div>
<div style="position:absolute;z-index:13;left:1208px;top:382px;width:52px;height:52px;background:#e1e1e1;border:1px solid #adadad;box-sizing:border-box"></div>
<div style="position:absolute;z-index:13;left:554px;top:438px;width:1px;height:36px;background:#e5e5e5"></div>
<div style="position:absolute;z-index:13;left:1074px;top:438px;width:1px;height:36px;background:#e5e5e5"></div>
<div style="position:absolute;z-index:13;left:1590px;top:438px;width:1px;height:36px;background:#e5e5e5"></div>
<div style="position:absolute;z-index:13;left:1844px;top:438px;width:1px;height:36px;background:#e5e5e5"></div>
<div style="position:absolute;z-index:13;left:297px;top:475px;width:1548px;height:54px;background:#0078d7"></div>
<div style="position:absolute;z-index:13;left:297px;top:584px;width:1548px;height:1px;background:#ececec"></div>
<div style="position:absolute;z-index:13;left:1429px;top:762px;width:136px;height:50px;background:#e1e1e1;border:2px solid #0078d7;box-sizing:border-box"></div>
<div style="position:absolute;z-index:13;left:1587px;top:762px;width:136px;height:50px;background:#e1e1e1;border:1px solid #adadad;box-sizing:border-box"></div>
<div style="position:absolute;z-index:13;left:1745px;top:762px;width:136px;height:50px;background:#e1e1e1;border:1px solid #adadad;box-sizing:border-box"></div>
<div style="position:absolute;z-index:13;left:294.48px;top:278.60px;font-family:'Liberation Sans',sans-serif;font-weight:400;font-style:normal;font-size:21.20px;line-height:1;white-space:nowrap;color:#000;transform:scaleX(1.0185);transform-origin:0 0;">条件付き書式ルールの管理</div>
<div style="position:absolute;z-index:13;left:295.01px;top:338.40px;font-family:'Liberation Sans',sans-serif;font-weight:400;font-style:normal;font-size:23.42px;line-height:1;white-space:nowrap;color:#000;transform:scaleX(0.9865);transform-origin:0 0;">書式ルールの表示(<u>S</u>):</div>
<div style="position:absolute;z-index:13;left:543.40px;top:341.00px;font-family:'Liberation Sans',sans-serif;font-weight:400;font-style:normal;font-size:22.02px;line-height:1;white-space:nowrap;color:#000;transform:scaleX(1.0595);transform-origin:0 0;">現在の選択範囲</div>
<svg style="position:absolute;z-index:14;left:1150px;top:402px" width="19" height="11" viewBox="0 0 19 11"><polygon points="9.5,0 19,11 0,11" fill="#c4c4c4"/></svg>
<svg style="position:absolute;z-index:14;left:1224px;top:402px" width="19" height="11" viewBox="0 0 19 11"><polygon points="0,0 19,0 9.5,11" fill="#555"/></svg>
<div style="position:absolute;z-index:14;left:555px;top:481px;width:500px;height:44px;background:#fff"></div>
<div style="position:absolute;z-index:14;left:1075px;top:484px;width:496px;height:38px;background:#fff;border:1px solid #a0a0a0;box-sizing:border-box"></div>
<div style="position:absolute;z-index:14;left:1075px;top:539px;width:496px;height:38px;background:#fff;border:1px solid #a0a0a0;box-sizing:border-box"></div>
<svg style="position:absolute;z-index:14;left:0;top:0;pointer-events:none" width="1966" height="1082" viewBox="0 0 1966 1082">
<path d="M1838.5,279.5 L1857.5,298.5 M1857.5,279.5 L1838.5,298.5" stroke="#000" stroke-width="2"/>
<path d="M934.3,349.3 L940.5,355.5 L946.7,349.3" fill="none" stroke="#333" stroke-width="1.4"/>
<rect x="323.5" y="394.4" width="27.3" height="24" fill="#fff"/>
<rect x="330.6" y="400.3" width="13.1" height="5.9" fill="#ebc47f"/>
<line x1="330.6" y1="394.4" x2="330.6" y2="418.4" stroke="#b4b4b4" stroke-width="1.1"/><line x1="343.7" y1="394.4" x2="343.7" y2="418.4" stroke="#b4b4b4" stroke-width="1.1"/><line x1="323.5" y1="400.3" x2="350.8" y2="400.3" stroke="#b4b4b4" stroke-width="1.1"/><line x1="323.5" y1="406.2" x2="350.8" y2="406.2" stroke="#b4b4b4" stroke-width="1.1"/><line x1="323.5" y1="412.5" x2="350.8" y2="412.5" stroke="#b4b4b4" stroke-width="1.1"/><rect x="323.5" y="394.4" width="27.30000000000001" height="24.0" fill="none" stroke="#8a8a8a" stroke-width="1.3"/>
<rect x="593.3" y="395.7" width="28.6" height="24.9" fill="#fff"/>
<rect x="600.7" y="401" width="13.7" height="4.9" fill="#ebc47f"/>
<line x1="600.7" y1="395.7" x2="600.7" y2="420.6" stroke="#b4b4b4" stroke-width="1.1"/><line x1="614.4" y1="395.7" x2="614.4" y2="420.6" stroke="#b4b4b4" stroke-width="1.1"/><line x1="593.3" y1="401" x2="621.9" y2="401" stroke="#b4b4b4" stroke-width="1.1"/><line x1="593.3" y1="405.9" x2="621.9" y2="405.9" stroke="#b4b4b4" stroke-width="1.1"/><line x1="593.3" y1="410.9" x2="621.9" y2="410.9" stroke="#b4b4b4" stroke-width="1.1"/><line x1="593.3" y1="415.5" x2="621.9" y2="415.5" stroke="#b4b4b4" stroke-width="1.1"/><rect x="593.3" y="395.7" width="28.600000000000023" height="24.900000000000034" fill="none" stroke="#8a8a8a" stroke-width="1.3"/>
<path d="M605,417.5 L620,402.5 Q621.5,401 623,402.5 L624,403.5 Q625.5,405 624,406.5 L609,421.5 L603.2,423.3 Z" fill="#4a7ebb" stroke="#fff" stroke-width="1.2"/>
<path d="M617.5,405 L621.5,409" stroke="#fff" stroke-width="1.2"/>
<path d="M884.5,397 L909.5,419 M909.5,397 L884.5,419" stroke="#6d6d6d" stroke-width="3.5" stroke-linecap="round"/>
</svg>
<div style="position:absolute;z-index:14;left:354.97px;top:398.20px;font-family:'Liberation Sans',sans-serif;font-weight:400;font-style:normal;font-size:22.74px;line-height:1;white-space:nowrap;color:#000;transform:scaleX(1.0279);transform-origin:0 0;">新規ルール(<u>N</u>)...</div>
<div style="position:absolute;z-index:14;left:626.35px;top:395.50px;font-family:'Liberation Sans',sans-serif;font-weight:400;font-style:normal;font-size:24.41px;line-height:1;white-space:nowrap;color:#000;transform:scaleX(0.9487);transform-origin:0 0;">ルールの編集(<u>E</u>)...</div>
<div style="position:absolute;z-index:14;left:915.06px;top:397.50px;font-family:'Liberation Sans',sans-serif;font-weight:400;font-style:normal;font-size:23.67px;line-height:1;white-space:nowrap;color:#000;transform:scaleX(0.9393);transform-origin:0 0;">ルールの削除(<u>D</u>)</div>
<div style="position:absolute;z-index:14;left:300.01px;top:445.70px;font-family:'Liberation Sans',sans-serif;font-weight:400;font-style:normal;font-size:23.49px;line-height:1;white-space:nowrap;color:#000;transform:scaleX(0.9935);transform-origin:0 0;">ルール (表示順で適用)</div>
<div style="position:absolute;z-index:14;left:558.65px;top:446.40px;font-family:'Liberation Sans',sans-serif;font-weight:400;font-style:normal;font-size:22.68px;line-height:1;white-space:nowrap;color:#000;transform:scaleX(1.0523);transform-origin:0 0;">書式</div>
<div style="position:absolute;z-index:14;left:1078.65px;top:446.00px;font-family:'Liberation Sans',sans-serif;font-weight:400;font-style:normal;font-size:21.04px;line-height:1;white-space:nowrap;color:#000;transform:scaleX(1.1508);transform-origin:0 0;">適用先</div>
<div style="position:absolute;z-index:14;left:1594.45px;top:444.90px;font-family:'Liberation Sans',sans-serif;font-weight:400;font-style:normal;font-size:21.00px;line-height:1;white-space:nowrap;color:#000;transform:scaleX(1.0485);transform-origin:0 0;">条件を満たす場合は停止</div>
<div style="position:absolute;z-index:14;left:1479.48px;top:775.30px;font-family:'Liberation Sans',sans-serif;font-weight:400;font-style:normal;font-size:26.11px;line-height:1;white-space:nowrap;color:#000;transform:scaleX(0.9222);transform-origin:0 0;">OK</div>
<div style="position:absolute;z-index:14;left:1606.77px;top:776.00px;font-family:'Liberation Sans',sans-serif;font-weight:400;font-style:normal;font-size:24.35px;line-height:1;white-space:nowrap;color:#000;transform:scaleX(0.7631);transform-origin:0 0;">キャンセル</div>
<div style="position:absolute;z-index:14;left:1787.86px;top:776.70px;font-family:'Liberation Sans',sans-serif;font-weight:400;font-style:normal;font-size:21.81px;line-height:1;white-space:nowrap;color:#000;transform:scaleX(1.1415);transform-origin:0 0;">適用</div>
<div style="position:absolute;z-index:14;left:1751.22px;top:274.90px;font-family:'Liberation Sans',sans-serif;font-weight:400;font-style:normal;font-size:27.50px;line-height:1;white-space:nowrap;color:#000;transform:scaleX(0.7769);transform-origin:0 0;">?</div>
<div style="position:absolute;z-index:15;left:1534px;top:484px;width:37px;height:38px;background:#fff;border:1px solid #adadad;box-shadow:inset 0 0 0 2px #e3e3e3;box-sizing:border-box"></div>
<div style="position:absolute;z-index:15;left:1706px;top:485px;width:25px;height:25px;background:#fff;border:2px solid #333;box-sizing:border-box"></div>
<div style="position:absolute;z-index:15;left:1534px;top:539px;width:37px;height:38px;background:#fff;border:1px solid #adadad;box-shadow:inset 0 0 0 2px #e3e3e3;box-sizing:border-box"></div>
<div style="position:absolute;z-index:15;left:1706px;top:540px;width:25px;height:25px;background:#fff;border:2px solid #333;box-sizing:border-box"></div>
<div style="position:absolute;z-index:15;left:349.42px;top:492.70px;font-family:'Liberation Sans',sans-serif;font-weight:400;font-style:normal;font-size:23.98px;line-height:1;white-space:nowrap;color:#fff;transform:scaleX(1.0834);transform-origin:0 0;">数式: =WEEK...</div>
<div style="position:absolute;z-index:15;left:349.37px;top:547.90px;font-family:'Liberation Sans',sans-serif;font-weight:400;font-style:normal;font-size:22.97px;line-height:1;white-space:nowrap;color:#000;transform:scaleX(1.1321);transform-origin:0 0;">数式: =WEEK...</div>
<div style="position:absolute;z-index:15;left:701.50px;top:486.20px;font-family:'Liberation Sans',sans-serif;font-weight:400;font-style:normal;font-size:30.33px;line-height:1;white-space:nowrap;color:#12aeee;transform:scaleX(0.8514);transform-origin:0 0;">Aa</div>
<div style="position:absolute;z-index:15;left:737.49px;top:490.50px;font-family:'Liberation Sans',sans-serif;font-weight:400;font-style:normal;font-size:24.63px;line-height:1;white-space:nowrap;color:#12aeee;transform:scaleX(1.1079);transform-origin:0 0;">あぁアァ亜宇</div>
<div style="position:absolute;z-index:15;left:701.50px;top:540.90px;font-family:'Liberation Sans',sans-serif;font-weight:400;font-style:normal;font-size:30.33px;line-height:1;white-space:nowrap;color:#ff1010;transform:scaleX(0.8514);transform-origin:0 0;">Aa</div>
<div style="position:absolute;z-index:15;left:737.49px;top:545.20px;font-family:'Liberation Sans',sans-serif;font-weight:400;font-style:normal;font-size:24.63px;line-height:1;white-space:nowrap;color:#ff1010;transform:scaleX(1.1079);transform-origin:0 0;">あぁアァ亜宇</div>
<div style="position:absolute;z-index:16;left:1080.43px;top:490.70px;font-family:'Liberation Sans',sans-serif;font-weight:400;font-style:normal;font-size:27.85px;line-height:1;white-space:nowrap;color:#000;transform:scaleX(0.9737);transform-origin:0 0;">=$A$1:$A$26</div>
<div style="position:absolute;z-index:16;left:1080.44px;top:545.60px;font-family:'Liberation Sans',sans-serif;font-weight:400;font-style:normal;font-size:28.08px;line-height:1;white-space:nowrap;color:#000;transform:scaleX(0.9621);transform-origin:0 0;">=$A$1:$A$26</div>
<svg style="position:absolute;z-index:17;left:0;top:0;pointer-events:none" width="1966" height="1082" viewBox="0 0 1966 1082"><polygon points="1551.3,488 1560.6,496.1 1560.6,502.7 1553.8,496.7 1553.8,512.8 1548.7,512.8 1548.7,496.7 1542.1,502.7 1542.1,496.1" fill="#000"/><rect x="1542.1" y="515.8" width="18.5" height="1.4" fill="#000"/></svg>
<svg style="position:absolute;z-index:17;left:0;top:0;pointer-events:none" width="1966" height="1082" viewBox="0 0 1966 1082"><polygon points="1551.3,543 1560.6,551.1 1560.6,557.7 1553.8,551.7 1553.8,567.8 1548.7,567.8 1548.7,551.7 1542.1,557.7 1542.1,551.1" fill="#000"/><rect x="1542.1" y="570.8" width="18.5" height="1.4" fill="#000"/></svg>
<div style="position:absolute;z-index:50;left:0px;top:0px;width:1966px;height:1082px;border:1px solid #838383;box-sizing:border-box;pointer-events:none"></div>
</body></html>
